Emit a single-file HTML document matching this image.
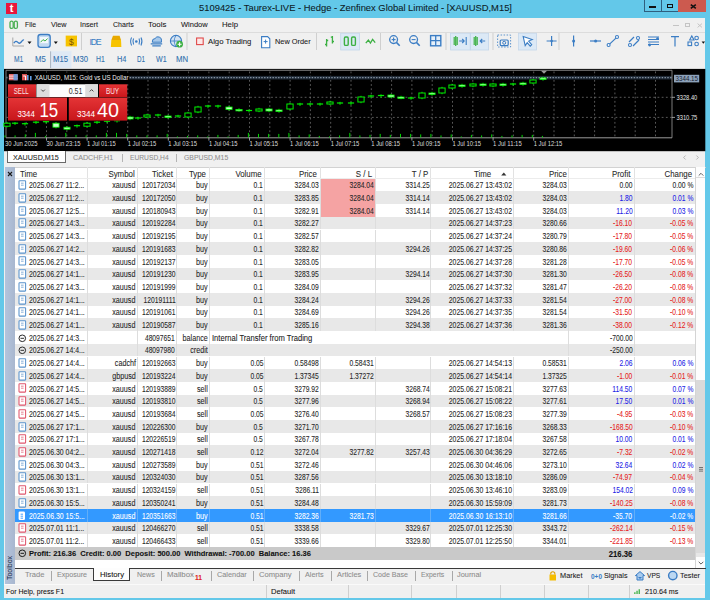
<!DOCTYPE html><html><head><meta charset="utf-8"><style>
*{margin:0;padding:0;box-sizing:border-box}
html,body{width:710px;height:600px;overflow:hidden;background:#63c8e9;font-family:"Liberation Sans",sans-serif;color:#1a1a1a}
.a{position:absolute;white-space:nowrap;-webkit-text-stroke:0.08px currentColor}
.bx{position:absolute}
</style></head><body>

<div class="bx" style="left:6px;top:3px;width:11px;height:11px;background:#e8173c;"></div>
<div class="a" style="left:7.67px;top:3.19px;font-size:11px;line-height:11px;width:5.66px;text-align:right;color:#fff;font-weight:bold;">t</div>
<div class="a" style="left:199.20px;top:3.81px;font-size:9.2px;line-height:9.2px;width:308.65px;color:#0d1b26;transform:scaleX(1.022);transform-origin:left center;">5109425 - Taurex-LIVE - Hedge - Zenfinex Global Limited - [XAUUSD,M15]</div>
<div class="bx" style="left:643.5px;top:0px;width:18px;height:12.3px;background:#63c8e9;border-left:1px solid #2f5f7e;border-bottom:1px solid #2f5f7e"></div>
<div class="bx" style="left:649px;top:5.9px;width:6.9px;height:2px;background:#111;"></div>
<div class="bx" style="left:661.2px;top:0px;width:17px;height:12.3px;background:#63c8e9;border-left:1px solid #2f5f7e;border-bottom:1px solid #2f5f7e"></div>
<div class="bx" style="left:667.1px;top:3.7px;width:6px;height:4.4px;background:transparent;border:1.3px solid #111;border-top-width:1.8px"></div>
<div class="bx" style="left:678px;top:0px;width:28px;height:12.3px;background:#cc5a4f;"></div>
<svg class="a" style="left:689.5px;top:3.6px" width="7" height="5"><path d="M0.8 0.6 L5.8 4.4 M5.8 0.6 L0.8 4.4" stroke="#111" stroke-width="1.5"/></svg>
<div class="bx" style="left:4px;top:17.6px;width:701.3px;height:580px;background:#f0f0f0;"></div>
<div class="bx" style="left:4px;top:17.6px;width:701.3px;height:13.9px;background:#f0f0f0;"></div>
<div class="bx" style="left:4px;top:31.5px;width:701.3px;height:1px;background:#dcdcdc;"></div>
<svg class="a" style="left:8.6px;top:19.6px" width="10" height="10" viewBox="0 0 10 10"><rect x="1" y="1.2" width="3.2" height="7.2" rx="1.5" fill="none" stroke="#4aae52" stroke-width="1.3"/><rect x="5.2" y="1.2" width="3.2" height="7.2" rx="1.5" fill="none" stroke="#4aae52" stroke-width="1.3"/></svg>
<div class="a" style="left:25.00px;top:20.63px;font-size:8px;line-height:8px;width:14.89px;color:#1a1a1a;transform:scaleX(0.853);transform-origin:left center;">File</div>
<div class="a" style="left:50.50px;top:20.63px;font-size:8px;line-height:8px;width:19.20px;color:#1a1a1a;transform:scaleX(0.901);transform-origin:left center;">View</div>
<div class="a" style="left:80.00px;top:20.63px;font-size:8px;line-height:8px;width:22.01px;color:#1a1a1a;transform:scaleX(0.900);transform-origin:left center;">Insert</div>
<div class="a" style="left:112.80px;top:20.63px;font-size:8px;line-height:8px;width:25.56px;color:#1a1a1a;transform:scaleX(0.883);transform-origin:left center;">Charts</div>
<div class="a" style="left:148.30px;top:20.63px;font-size:8px;line-height:8px;width:20.68px;color:#1a1a1a;transform:scaleX(0.980);transform-origin:left center;">Tools</div>
<div class="a" style="left:181.30px;top:20.63px;font-size:8px;line-height:8px;width:30.45px;color:#1a1a1a;transform:scaleX(0.935);transform-origin:left center;">Window</div>
<div class="a" style="left:221.80px;top:20.63px;font-size:8px;line-height:8px;width:18.45px;color:#1a1a1a;transform:scaleX(0.972);transform-origin:left center;">Help</div>
<div class="bx" style="left:673.2px;top:25px;width:5.5px;height:1.2px;background:#c4c4c4;"></div>
<div class="bx" style="left:684.7px;top:22.9px;width:5px;height:4px;background:transparent;border:1px solid #c4c4c4;border-top-width:1.5px"></div>
<svg class="a" style="left:696.5px;top:22.5px" width="6" height="5"><path d="M0.6 0.6 L5 4.4 M5 0.6 L0.6 4.4" stroke="#c4c4c4" stroke-width="1"/></svg>
<svg class="a" style="left:0;top:0" width="710" height="70" viewBox="0 0 710 70"><line x1="81.5" y1="33" x2="81.5" y2="50" stroke="#cfcfcf" stroke-width="1"/><line x1="187" y1="33" x2="187" y2="50" stroke="#cfcfcf" stroke-width="1"/><line x1="316.5" y1="33" x2="316.5" y2="50" stroke="#cfcfcf" stroke-width="1"/><line x1="380.5" y1="33" x2="380.5" y2="50" stroke="#cfcfcf" stroke-width="1"/><line x1="446" y1="33" x2="446" y2="50" stroke="#cfcfcf" stroke-width="1"/><line x1="493" y1="33" x2="493" y2="50" stroke="#cfcfcf" stroke-width="1"/><line x1="559" y1="33" x2="559" y2="50" stroke="#cfcfcf" stroke-width="1"/><path d="M12.8 37.5 V46 H24" fill="none" stroke="#a8a8a8" stroke-width="1"/><path d="M13.8 43.2 Q15.8 40 17.6 42.2 T21.2 42 T24 40" fill="none" stroke="#3b7dc4" stroke-width="1.3"/><path d="M27.5 41.5 h4 l-2 2.6z" fill="#111"/><rect x="38" y="34.5" width="12.2" height="12.8" rx="2.6" fill="#c3daf1" stroke="#3b7dc4" stroke-width="1.3"/><rect x="40" y="37" width="8.2" height="6.2" fill="#f2f8fd"/><path d="M40.6 42.2 L43 39.6 L45 41 L47.6 38.6" fill="none" stroke="#3cb043" stroke-width="1"/><path d="M53.8 41.5 h4 l-2 2.6z" fill="#111"/><rect x="65.7" y="35.6" width="11.3" height="10.8" fill="#f7c300"/><text x="71.4" y="44.6" font-size="8.5" text-anchor="middle" fill="#7a5200" font-family="Liberation Sans">$</text><text x="89.5" y="45.2" font-size="8.8" fill="#3b7dc4" font-family="Liberation Sans" letter-spacing="-0.7" textLength="11.5">IDE</text><path d="M111.3 40 h9.7 l0.4 7 h-10.5z" fill="#f7c300"/><path d="M113 35.8 h6.6 l1.4 4.2 h-9.6z" fill="#e8a900"/><circle cx="136.3" cy="41.5" r="1.3" fill="#3b7dc4"/><path d="M133.6 38.6 Q132.2 41.5 133.6 44.4 M139 38.6 Q140.4 41.5 139 44.4 M131.6 37.6 Q129.6 41.5 131.6 45.4 M141 37.6 Q143 41.5 141 45.4" fill="none" stroke="#3b7dc4" stroke-width="1.1"/><path d="M152.3 42.2 Q152 38.6 155 38.6 Q156.6 35.9 159.2 37 Q162.2 37.6 161.5 42.2z" fill="#a7c8ea" stroke="#3b7dc4" stroke-width="1"/><path d="M150.7 43.8 h11.5 M152.3 45.8 h8.5" stroke="#3b7dc4" stroke-width="1.2"/><circle cx="176" cy="41" r="5.6" fill="#d4e3f2" stroke="#3b7dc4" stroke-width="1.1"/><path d="M176 35.4 Q172.4 41 176 46.6 M170.4 41 h11.2" fill="none" stroke="#3b7dc4" stroke-width="0.8"/><circle cx="179.6" cy="44.2" r="3.4" fill="#3cb043"/><path d="M177.6 44.2 h4 M179.6 42.2 v4" stroke="#fff" stroke-width="1.1"/><rect x="196.6" y="38" width="6.6" height="6.6" fill="#fde8e8" stroke="#e04a4a" stroke-width="1.1"/><path d="M261.6 36.6 h6 l2.2 2.2 v9 h-8.2z" fill="#fff" stroke="#3b7dc4" stroke-width="1.1"/><path d="M263.6 41.6 h4 M265.6 39.6 v4" stroke="#3b7dc4" stroke-width="1"/><path d="M326.6 39 v7.5 M325 44.5 h1.6 M326.6 40.5 h1.6 M332.4 36 v7.5 M330.8 37.2 h1.6 M332.4 41.5 h1.6" stroke="#3cb043" stroke-width="1.3" fill="none"/><rect x="340.7" y="33.2" width="18.8" height="16.8" fill="#dce9f6" stroke="#c4d6ea" stroke-width="0.8"/><rect x="344.4" y="37" width="3.8" height="8.4" rx="1.2" fill="none" stroke="#3cb043" stroke-width="1.4"/><rect x="351.6" y="37" width="3.8" height="8.4" rx="1.2" fill="none" stroke="#3cb043" stroke-width="1.4"/><path d="M365.8 43.2 l2.6 -3.2 l2 3 l2.2 -3.6 l2.6 3.2" fill="none" stroke="#3cb043" stroke-width="1.3"/><circle cx="393.6" cy="39.6" r="3.9" fill="none" stroke="#3b7dc4" stroke-width="1.3"/><path d="M396.40000000000003 42.4 l3.3 3.3" stroke="#3b7dc4" stroke-width="1.5"/><path d="M391.6 39.6 h4" stroke="#3b7dc4" stroke-width="1.1"/><path d="M393.6 37.6 v4" stroke="#3b7dc4" stroke-width="1.1"/><circle cx="413.6" cy="39.6" r="3.9" fill="none" stroke="#3b7dc4" stroke-width="1.3"/><path d="M416.40000000000003 42.4 l3.3 3.3" stroke="#3b7dc4" stroke-width="1.5"/><path d="M411.6 39.6 h4" stroke="#3b7dc4" stroke-width="1.1"/><rect x="430.6" y="35.6" width="10.2" height="10.2" fill="#e6f0fa" stroke="#3b7dc4" stroke-width="1.4"/><path d="M435.7 35.6 v10.2 M430.6 40.7 h10.2" stroke="#3b7dc4" stroke-width="1.3"/><rect x="450.6" y="33.2" width="19.6" height="16.8" fill="#dce9f6" stroke="#c4d6ea" stroke-width="0.8"/><rect x="470.6" y="33.2" width="18" height="16.8" fill="#dce9f6" stroke="#c4d6ea" stroke-width="0.8"/><path d="M454.2 37 v8 M457.2 37 v8 M455.7 36 v10" stroke="#3cb043" stroke-width="1.2"/><path d="M459.2 41 h5 M462.2 39 l2 2 l-2 2 M466.2 37 v8" stroke="#3b7dc4" stroke-width="1.1" fill="none"/><path d="M474.2 37 v8 M477.2 37 v8 M475.7 36 v10" stroke="#3cb043" stroke-width="1.2"/><path d="M485.2 41 h-5 M482.2 39 l-2 2 l2 2" stroke="#3b7dc4" stroke-width="1.1" fill="none"/><rect x="497.6" y="35" width="13" height="12" fill="none" stroke="#3b7dc4" stroke-width="0.8" stroke-dasharray="1.5 1.5"/><rect x="500.2" y="40" width="8" height="5.6" rx="1" fill="none" stroke="#3b7dc4" stroke-width="1.2"/><circle cx="504.2" cy="42.8" r="1.5" fill="none" stroke="#3b7dc4" stroke-width="1"/><rect x="518.6" y="33.2" width="18" height="16.8" fill="#dce9f6" stroke="#c4d6ea" stroke-width="0.8"/><path d="M523.2 36.6 l9 3 l-3.5 1.5 l3 3.5 l-1.5 1.5 l-3 -3.5 l-2 3z" fill="#fff" stroke="#3b7dc4" stroke-width="1.1"/><path d="M551.6 36 v10 M546.6 41 h10" stroke="#3b7dc4" stroke-width="1.2"/><circle cx="551.6" cy="41" r="1.3" fill="#3b7dc4"/><path d="M573.6 35.6 v11" stroke="#3b7dc4" stroke-width="1.2"/><circle cx="573.6" cy="41" r="1.5" fill="#3b7dc4"/><path d="M590 41 h11" stroke="#3b7dc4" stroke-width="1.2"/><circle cx="595.6" cy="41" r="1.5" fill="#3b7dc4"/><path d="M608 45.6 l9.5 -9" stroke="#3b7dc4" stroke-width="1.2"/><circle cx="608.6" cy="45" r="1.5" fill="#fff" stroke="#3b7dc4" stroke-width="1.1"/><circle cx="617" cy="37" r="1.5" fill="#fff" stroke="#3b7dc4" stroke-width="1.1"/><path d="M629 42 l5 -5 M633 46 l6 -6" stroke="#3b7dc4" stroke-width="1.2"/><circle cx="630" cy="45" r="1.5" fill="#fff" stroke="#3b7dc4" stroke-width="1.1"/><circle cx="638" cy="38" r="1.5" fill="#fff" stroke="#3b7dc4" stroke-width="1.1"/><path d="M648 37 h11 M648 39.5 h11 M648 42 h11 M648 44.5 h11" stroke="#3b7dc4" stroke-width="1"/><circle cx="657.6" cy="38.6" r="1.4" fill="#3b7dc4"/><circle cx="649.6" cy="45" r="1.4" fill="#3b7dc4"/><path d="M671 36.6 h8 M675 36.6 v10" stroke="#3b7dc4" stroke-width="1.2"/><path d="M689.6 40 l2.2 -4 l2.2 4z" fill="none" stroke="#3b7dc4" stroke-width="1.1"/><circle cx="696.6" cy="38" r="1.8" fill="none" stroke="#3b7dc4" stroke-width="1.1"/><rect x="688" y="42" width="3.6" height="3.6" fill="none" stroke="#3b7dc4" stroke-width="1.1"/><circle cx="696.6" cy="44" r="1.8" fill="none" stroke="#3b7dc4" stroke-width="1.1"/><path d="M701.6 41.6 h3.5 l-1.75 2.2z" fill="#111"/><rect x="50.1" y="50.9" width="21.4" height="17.2" fill="#dfe9f5"/><line x1="50.6" y1="51" x2="50.6" y2="68" stroke="#a9b4c0" stroke-width="1"/><line x1="50.1" y1="51.2" x2="71.5" y2="51.2" stroke="#e8eef5" stroke-width="0.6"/></svg>
<div class="a" style="left:208.40px;top:38.23px;font-size:8px;line-height:8px;width:46.92px;color:#1a1a1a;transform:scaleX(0.966);transform-origin:left center;">Algo Trading</div>
<div class="a" style="left:275.00px;top:38.23px;font-size:8px;line-height:8px;width:40.68px;color:#1a1a1a;transform:scaleX(0.920);transform-origin:left center;">New Order</div>
<div class="a" style="left:14.40px;top:55.20px;font-size:8.5px;line-height:8.5px;width:13.81px;color:#2f6fae;transform:scaleX(0.788);transform-origin:left center;">M1</div>
<div class="a" style="left:34.60px;top:55.20px;font-size:8.5px;line-height:8.5px;width:13.81px;color:#2f6fae;transform:scaleX(0.906);transform-origin:left center;">M5</div>
<div class="a" style="left:52.70px;top:55.20px;font-size:8.5px;line-height:8.5px;width:18.54px;color:#2f6fae;transform:scaleX(0.901);transform-origin:left center;">M15</div>
<div class="a" style="left:73.00px;top:55.20px;font-size:8.5px;line-height:8.5px;width:18.54px;color:#2f6fae;transform:scaleX(0.901);transform-origin:left center;">M30</div>
<div class="a" style="left:95.80px;top:55.20px;font-size:8.5px;line-height:8.5px;width:12.87px;color:#2f6fae;transform:scaleX(0.801);transform-origin:left center;">H1</div>
<div class="a" style="left:116.60px;top:55.20px;font-size:8.5px;line-height:8.5px;width:12.87px;color:#2f6fae;transform:scaleX(0.865);transform-origin:left center;">H4</div>
<div class="a" style="left:137.00px;top:55.20px;font-size:8.5px;line-height:8.5px;width:12.87px;color:#2f6fae;transform:scaleX(0.736);transform-origin:left center;">D1</div>
<div class="a" style="left:156.00px;top:55.20px;font-size:8.5px;line-height:8.5px;width:14.75px;color:#2f6fae;transform:scaleX(0.831);transform-origin:left center;">W1</div>
<div class="a" style="left:175.50px;top:55.20px;font-size:8.5px;line-height:8.5px;width:15.22px;color:#2f6fae;transform:scaleX(0.915);transform-origin:left center;">MN</div>
<svg class="a" style="left:0;top:0" width="710" height="152" viewBox="0 0 710 152"><rect x="4" y="68.9" width="701.3" height="82.3" fill="#000"/><line x1="26.2" y1="71.5" x2="26.2" y2="137" stroke="#808080" stroke-width="0.7" stroke-dasharray="1.8 2.4"/><line x1="46.5" y1="71.5" x2="46.5" y2="137" stroke="#808080" stroke-width="0.7" stroke-dasharray="1.8 2.4"/><line x1="66.8" y1="71.5" x2="66.8" y2="137" stroke="#808080" stroke-width="0.7" stroke-dasharray="1.8 2.4"/><line x1="87.1" y1="71.5" x2="87.1" y2="137" stroke="#808080" stroke-width="0.7" stroke-dasharray="1.8 2.4"/><line x1="107.4" y1="71.5" x2="107.4" y2="137" stroke="#808080" stroke-width="0.7" stroke-dasharray="1.8 2.4"/><line x1="127.7" y1="71.5" x2="127.7" y2="137" stroke="#808080" stroke-width="0.7" stroke-dasharray="1.8 2.4"/><line x1="148.0" y1="71.5" x2="148.0" y2="137" stroke="#808080" stroke-width="0.7" stroke-dasharray="1.8 2.4"/><line x1="168.3" y1="71.5" x2="168.3" y2="137" stroke="#808080" stroke-width="0.7" stroke-dasharray="1.8 2.4"/><line x1="188.6" y1="71.5" x2="188.6" y2="137" stroke="#808080" stroke-width="0.7" stroke-dasharray="1.8 2.4"/><line x1="208.9" y1="71.5" x2="208.9" y2="137" stroke="#808080" stroke-width="0.7" stroke-dasharray="1.8 2.4"/><line x1="229.2" y1="71.5" x2="229.2" y2="137" stroke="#808080" stroke-width="0.7" stroke-dasharray="1.8 2.4"/><line x1="249.5" y1="71.5" x2="249.5" y2="137" stroke="#808080" stroke-width="0.7" stroke-dasharray="1.8 2.4"/><line x1="269.8" y1="71.5" x2="269.8" y2="137" stroke="#808080" stroke-width="0.7" stroke-dasharray="1.8 2.4"/><line x1="290.1" y1="71.5" x2="290.1" y2="137" stroke="#808080" stroke-width="0.7" stroke-dasharray="1.8 2.4"/><line x1="310.4" y1="71.5" x2="310.4" y2="137" stroke="#808080" stroke-width="0.7" stroke-dasharray="1.8 2.4"/><line x1="330.7" y1="71.5" x2="330.7" y2="137" stroke="#808080" stroke-width="0.7" stroke-dasharray="1.8 2.4"/><line x1="351.0" y1="71.5" x2="351.0" y2="137" stroke="#808080" stroke-width="0.7" stroke-dasharray="1.8 2.4"/><line x1="371.3" y1="71.5" x2="371.3" y2="137" stroke="#808080" stroke-width="0.7" stroke-dasharray="1.8 2.4"/><line x1="391.6" y1="71.5" x2="391.6" y2="137" stroke="#808080" stroke-width="0.7" stroke-dasharray="1.8 2.4"/><line x1="411.9" y1="71.5" x2="411.9" y2="137" stroke="#808080" stroke-width="0.7" stroke-dasharray="1.8 2.4"/><line x1="432.2" y1="71.5" x2="432.2" y2="137" stroke="#808080" stroke-width="0.7" stroke-dasharray="1.8 2.4"/><line x1="452.5" y1="71.5" x2="452.5" y2="137" stroke="#808080" stroke-width="0.7" stroke-dasharray="1.8 2.4"/><line x1="472.8" y1="71.5" x2="472.8" y2="137" stroke="#808080" stroke-width="0.7" stroke-dasharray="1.8 2.4"/><line x1="493.1" y1="71.5" x2="493.1" y2="137" stroke="#808080" stroke-width="0.7" stroke-dasharray="1.8 2.4"/><line x1="513.4" y1="71.5" x2="513.4" y2="137" stroke="#808080" stroke-width="0.7" stroke-dasharray="1.8 2.4"/><line x1="533.7" y1="71.5" x2="533.7" y2="137" stroke="#808080" stroke-width="0.7" stroke-dasharray="1.8 2.4"/><line x1="554.0" y1="71.5" x2="554.0" y2="137" stroke="#808080" stroke-width="0.7" stroke-dasharray="1.8 2.4"/><line x1="574.3" y1="71.5" x2="574.3" y2="137" stroke="#808080" stroke-width="0.7" stroke-dasharray="1.8 2.4"/><line x1="594.6" y1="71.5" x2="594.6" y2="137" stroke="#808080" stroke-width="0.7" stroke-dasharray="1.8 2.4"/><line x1="614.9" y1="71.5" x2="614.9" y2="137" stroke="#808080" stroke-width="0.7" stroke-dasharray="1.8 2.4"/><line x1="635.2" y1="71.5" x2="635.2" y2="137" stroke="#808080" stroke-width="0.7" stroke-dasharray="1.8 2.4"/><line x1="655.5" y1="71.5" x2="655.5" y2="137" stroke="#808080" stroke-width="0.7" stroke-dasharray="1.8 2.4"/><line x1="6.5" y1="97.3" x2="672" y2="97.3" stroke="#808080" stroke-width="0.7" stroke-dasharray="1.8 2.4"/><line x1="6.5" y1="117.4" x2="672" y2="117.4" stroke="#808080" stroke-width="0.7" stroke-dasharray="1.8 2.4"/><rect x="6.5" y="75.9" width="665.5" height="3.6" fill="#1f2a36"/><line x1="6.5" y1="77.6" x2="672" y2="77.6" stroke="#8794a4" stroke-width="1.4" stroke-dasharray="1.4 1.4"/><path d="M6 137.8 V70.3 H672 V137.8" fill="none" stroke="#8a8a8a" stroke-width="0.9"/><line x1="6" y1="137.8" x2="672" y2="137.8" stroke="#9a9a9a" stroke-width="1"/><line x1="672" y1="97.3" x2="675" y2="97.3" stroke="#bbb" stroke-width="0.8"/><text x="676.50" y="100.00" font-size="7.6" fill="#e6e6e6" font-family="Liberation Sans" font-weight="normal" text-anchor="start" textLength="20.80" lengthAdjust="spacingAndGlyphs">3328.40</text><line x1="672" y1="117.4" x2="675" y2="117.4" stroke="#bbb" stroke-width="0.8"/><text x="676.50" y="120.10" font-size="7.6" fill="#e6e6e6" font-family="Liberation Sans" font-weight="normal" text-anchor="start" textLength="20.80" lengthAdjust="spacingAndGlyphs">3310.75</text><rect x="674" y="74.8" width="25.2" height="7.6" fill="#8da2ba"/><text x="675.60" y="81.20" font-size="7.4" fill="#152030" font-family="Liberation Sans" font-weight="normal" text-anchor="start" textLength="22.40" lengthAdjust="spacingAndGlyphs">3344.15</text><text x="5.00" y="145.80" font-size="7.6" fill="#dedede" font-family="Liberation Sans" font-weight="normal" text-anchor="start" textLength="32.50" lengthAdjust="spacingAndGlyphs">30 Jun 2025</text><text x="46.50" y="145.80" font-size="7.6" fill="#dedede" font-family="Liberation Sans" font-weight="normal" text-anchor="start" textLength="34.00" lengthAdjust="spacingAndGlyphs">30 Jun 23:15</text><line x1="46.5" y1="137.4" x2="46.5" y2="140.6" stroke="#bbb" stroke-width="0.8"/><text x="87.10" y="145.80" font-size="7.6" fill="#dedede" font-family="Liberation Sans" font-weight="normal" text-anchor="start" textLength="28.60" lengthAdjust="spacingAndGlyphs">1 Jul 01:15</text><line x1="87.1" y1="137.4" x2="87.1" y2="140.6" stroke="#bbb" stroke-width="0.8"/><text x="127.70" y="145.80" font-size="7.6" fill="#dedede" font-family="Liberation Sans" font-weight="normal" text-anchor="start" textLength="28.60" lengthAdjust="spacingAndGlyphs">1 Jul 02:15</text><line x1="127.7" y1="137.4" x2="127.7" y2="140.6" stroke="#bbb" stroke-width="0.8"/><text x="168.30" y="145.80" font-size="7.6" fill="#dedede" font-family="Liberation Sans" font-weight="normal" text-anchor="start" textLength="28.60" lengthAdjust="spacingAndGlyphs">1 Jul 03:15</text><line x1="168.3" y1="137.4" x2="168.3" y2="140.6" stroke="#bbb" stroke-width="0.8"/><text x="208.90" y="145.80" font-size="7.6" fill="#dedede" font-family="Liberation Sans" font-weight="normal" text-anchor="start" textLength="28.60" lengthAdjust="spacingAndGlyphs">1 Jul 04:15</text><line x1="208.9" y1="137.4" x2="208.9" y2="140.6" stroke="#bbb" stroke-width="0.8"/><text x="249.50" y="145.80" font-size="7.6" fill="#dedede" font-family="Liberation Sans" font-weight="normal" text-anchor="start" textLength="28.60" lengthAdjust="spacingAndGlyphs">1 Jul 05:15</text><line x1="249.5" y1="137.4" x2="249.5" y2="140.6" stroke="#bbb" stroke-width="0.8"/><text x="290.10" y="145.80" font-size="7.6" fill="#dedede" font-family="Liberation Sans" font-weight="normal" text-anchor="start" textLength="28.60" lengthAdjust="spacingAndGlyphs">1 Jul 06:15</text><line x1="290.1" y1="137.4" x2="290.1" y2="140.6" stroke="#bbb" stroke-width="0.8"/><text x="330.70" y="145.80" font-size="7.6" fill="#dedede" font-family="Liberation Sans" font-weight="normal" text-anchor="start" textLength="28.60" lengthAdjust="spacingAndGlyphs">1 Jul 07:15</text><line x1="330.7" y1="137.4" x2="330.7" y2="140.6" stroke="#bbb" stroke-width="0.8"/><text x="371.30" y="145.80" font-size="7.6" fill="#dedede" font-family="Liberation Sans" font-weight="normal" text-anchor="start" textLength="28.60" lengthAdjust="spacingAndGlyphs">1 Jul 08:15</text><line x1="371.3" y1="137.4" x2="371.3" y2="140.6" stroke="#bbb" stroke-width="0.8"/><text x="411.90" y="145.80" font-size="7.6" fill="#dedede" font-family="Liberation Sans" font-weight="normal" text-anchor="start" textLength="28.60" lengthAdjust="spacingAndGlyphs">1 Jul 09:15</text><line x1="411.9" y1="137.4" x2="411.9" y2="140.6" stroke="#bbb" stroke-width="0.8"/><text x="452.50" y="145.80" font-size="7.6" fill="#dedede" font-family="Liberation Sans" font-weight="normal" text-anchor="start" textLength="28.60" lengthAdjust="spacingAndGlyphs">1 Jul 10:15</text><line x1="452.5" y1="137.4" x2="452.5" y2="140.6" stroke="#bbb" stroke-width="0.8"/><text x="493.10" y="145.80" font-size="7.6" fill="#dedede" font-family="Liberation Sans" font-weight="normal" text-anchor="start" textLength="28.60" lengthAdjust="spacingAndGlyphs">1 Jul 11:15</text><line x1="493.1" y1="137.4" x2="493.1" y2="140.6" stroke="#bbb" stroke-width="0.8"/><text x="533.70" y="145.80" font-size="7.6" fill="#dedede" font-family="Liberation Sans" font-weight="normal" text-anchor="start" textLength="28.60" lengthAdjust="spacingAndGlyphs">1 Jul 12:15</text><line x1="533.7" y1="137.4" x2="533.7" y2="140.6" stroke="#bbb" stroke-width="0.8"/><line x1="7" y1="122.0" x2="7" y2="127.4" stroke="#00ee00" stroke-width="0.9"/><rect x="3.9" y="123.2" width="6.2" height="3.0" fill="#000" stroke="#00ee00" stroke-width="1"/><line x1="15" y1="122.0" x2="15" y2="125.0" stroke="#00ee00" stroke-width="0.9"/><line x1="11.9" y1="123.2" x2="18.1" y2="123.2" stroke="#00ee00" stroke-width="1.2"/><line x1="25" y1="122.5" x2="25" y2="125.60000000000001" stroke="#00ee00" stroke-width="0.9"/><line x1="21.9" y1="123.7" x2="28.1" y2="123.7" stroke="#00ee00" stroke-width="1.2"/><line x1="36" y1="121.0" x2="36" y2="124.0" stroke="#00ee00" stroke-width="0.9"/><line x1="32.9" y1="122.2" x2="39.1" y2="122.2" stroke="#00ee00" stroke-width="1.2"/><line x1="46" y1="120.5" x2="46" y2="123.60000000000001" stroke="#00ee00" stroke-width="0.9"/><line x1="42.9" y1="121.7" x2="49.1" y2="121.7" stroke="#00ee00" stroke-width="1.2"/><line x1="56" y1="122.0" x2="56" y2="128.4" stroke="#00ee00" stroke-width="0.9"/><rect x="52.9" y="123.2" width="6.2" height="4.0" fill="#c8ffc8" stroke="#00ee00" stroke-width="0.8"/><line x1="67" y1="126.0" x2="67" y2="130.39999999999998" stroke="#00ee00" stroke-width="0.9"/><rect x="63.9" y="127.2" width="6.2" height="1.9999999999999858" fill="#c8ffc8" stroke="#00ee00" stroke-width="0.8"/><line x1="77" y1="124.5" x2="77" y2="127.7" stroke="#00ee00" stroke-width="0.9"/><line x1="73.9" y1="125.7" x2="80.1" y2="125.7" stroke="#00ee00" stroke-width="1.2"/><line x1="87" y1="122.0" x2="87" y2="127.4" stroke="#00ee00" stroke-width="0.9"/><rect x="83.9" y="123.2" width="6.2" height="3.0" fill="#000" stroke="#00ee00" stroke-width="1"/><line x1="97" y1="121.0" x2="97" y2="124.0" stroke="#00ee00" stroke-width="0.9"/><line x1="93.9" y1="122.2" x2="100.1" y2="122.2" stroke="#00ee00" stroke-width="1.2"/><line x1="107" y1="120.0" x2="107" y2="123.4" stroke="#00ee00" stroke-width="0.9"/><line x1="103.9" y1="121.2" x2="110.1" y2="121.2" stroke="#00ee00" stroke-width="1.2"/><line x1="117" y1="119.5" x2="117" y2="122.60000000000001" stroke="#00ee00" stroke-width="0.9"/><line x1="113.9" y1="120.7" x2="120.1" y2="120.7" stroke="#00ee00" stroke-width="1.2"/><line x1="130" y1="115.8" x2="130" y2="120.2" stroke="#00ee00" stroke-width="0.9"/><rect x="126.9" y="117" width="6.2" height="2" fill="#c8ffc8" stroke="#00ee00" stroke-width="0.8"/><line x1="138" y1="116.8" x2="138" y2="119.8" stroke="#00ee00" stroke-width="0.9"/><line x1="134.9" y1="118" x2="141.1" y2="118" stroke="#00ee00" stroke-width="1.2"/><line x1="147" y1="113.8" x2="147" y2="118.2" stroke="#00ee00" stroke-width="0.9"/><rect x="143.9" y="115" width="6.2" height="2" fill="#000" stroke="#00ee00" stroke-width="1"/><line x1="158" y1="113.8" x2="158" y2="116.8" stroke="#00ee00" stroke-width="0.9"/><line x1="154.9" y1="115" x2="161.1" y2="115" stroke="#00ee00" stroke-width="1.2"/><line x1="168" y1="114.8" x2="168" y2="118.7" stroke="#00ee00" stroke-width="0.9"/><rect x="164.9" y="116" width="6.2" height="1.5" fill="#c8ffc8" stroke="#00ee00" stroke-width="0.8"/><line x1="178" y1="114.8" x2="178" y2="117.8" stroke="#00ee00" stroke-width="0.9"/><line x1="174.9" y1="116" x2="181.1" y2="116" stroke="#00ee00" stroke-width="1.2"/><line x1="188" y1="111.8" x2="188" y2="118.2" stroke="#00ee00" stroke-width="0.9"/><rect x="184.9" y="113" width="6.2" height="4" fill="#000" stroke="#00ee00" stroke-width="1"/><line x1="198" y1="105.8" x2="198" y2="113.2" stroke="#00ee00" stroke-width="0.9"/><rect x="194.9" y="107" width="6.2" height="5" fill="#000" stroke="#00ee00" stroke-width="1"/><line x1="208" y1="104.8" x2="208" y2="108.2" stroke="#00ee00" stroke-width="0.9"/><line x1="204.9" y1="106" x2="211.1" y2="106" stroke="#00ee00" stroke-width="1.2"/><line x1="218" y1="104.8" x2="218" y2="108.2" stroke="#00ee00" stroke-width="0.9"/><line x1="214.9" y1="106" x2="221.1" y2="106" stroke="#00ee00" stroke-width="1.2"/><line x1="229" y1="105.8" x2="229" y2="110.7" stroke="#00ee00" stroke-width="0.9"/><rect x="225.9" y="107" width="6.2" height="2.5" fill="#c8ffc8" stroke="#00ee00" stroke-width="0.8"/><line x1="239" y1="108.3" x2="239" y2="111.7" stroke="#00ee00" stroke-width="0.9"/><rect x="235.9" y="109.5" width="6.2" height="1.4" fill="#c8ffc8" stroke="#00ee00" stroke-width="0.8"/><line x1="249" y1="109.3" x2="249" y2="112.4" stroke="#00ee00" stroke-width="0.9"/><line x1="245.9" y1="110.5" x2="252.1" y2="110.5" stroke="#00ee00" stroke-width="1.2"/><line x1="259" y1="107.8" x2="259" y2="112.2" stroke="#00ee00" stroke-width="0.9"/><rect x="255.9" y="109" width="6.2" height="2" fill="#000" stroke="#00ee00" stroke-width="1"/><line x1="269" y1="107.8" x2="269" y2="112.2" stroke="#00ee00" stroke-width="0.9"/><rect x="265.9" y="109" width="6.2" height="2" fill="#c8ffc8" stroke="#00ee00" stroke-width="0.8"/><line x1="279" y1="108.8" x2="279" y2="112.7" stroke="#00ee00" stroke-width="0.9"/><rect x="275.9" y="110" width="6.2" height="1.5" fill="#c8ffc8" stroke="#00ee00" stroke-width="0.8"/><line x1="290" y1="102.8" x2="290" y2="110.2" stroke="#00ee00" stroke-width="0.9"/><rect x="286.9" y="104" width="6.2" height="5" fill="#000" stroke="#00ee00" stroke-width="1"/><line x1="300" y1="102.8" x2="300" y2="106.0" stroke="#00ee00" stroke-width="0.9"/><line x1="296.9" y1="104" x2="303.1" y2="104" stroke="#00ee00" stroke-width="1.2"/><line x1="310" y1="102.8" x2="310" y2="105.8" stroke="#00ee00" stroke-width="0.9"/><line x1="306.9" y1="104" x2="313.1" y2="104" stroke="#00ee00" stroke-width="1.2"/><line x1="320" y1="102.8" x2="320" y2="105.8" stroke="#00ee00" stroke-width="0.9"/><line x1="316.9" y1="104" x2="323.1" y2="104" stroke="#00ee00" stroke-width="1.2"/><line x1="330" y1="100.8" x2="330" y2="105.2" stroke="#00ee00" stroke-width="0.9"/><rect x="326.9" y="102" width="6.2" height="2" fill="#000" stroke="#00ee00" stroke-width="1"/><line x1="340" y1="101.8" x2="340" y2="104.8" stroke="#00ee00" stroke-width="0.9"/><line x1="336.9" y1="103" x2="343.1" y2="103" stroke="#00ee00" stroke-width="1.2"/><line x1="351" y1="101.8" x2="351" y2="105.2" stroke="#00ee00" stroke-width="0.9"/><line x1="347.9" y1="103" x2="354.1" y2="103" stroke="#00ee00" stroke-width="1.2"/><line x1="361" y1="95.8" x2="361" y2="103.2" stroke="#00ee00" stroke-width="0.9"/><rect x="357.9" y="97" width="6.2" height="5" fill="#000" stroke="#00ee00" stroke-width="1"/><line x1="371" y1="94.8" x2="371" y2="98.2" stroke="#00ee00" stroke-width="0.9"/><line x1="367.9" y1="96" x2="374.1" y2="96" stroke="#00ee00" stroke-width="1.2"/><line x1="381" y1="94.3" x2="381" y2="97.7" stroke="#00ee00" stroke-width="0.9"/><line x1="377.9" y1="95.5" x2="384.1" y2="95.5" stroke="#00ee00" stroke-width="1.2"/><line x1="391" y1="93.8" x2="391" y2="98.2" stroke="#00ee00" stroke-width="0.9"/><rect x="387.9" y="95" width="6.2" height="2" fill="#c8ffc8" stroke="#00ee00" stroke-width="0.8"/><line x1="401" y1="95.8" x2="401" y2="99.2" stroke="#00ee00" stroke-width="0.9"/><rect x="397.9" y="97" width="6.2" height="1.4" fill="#c8ffc8" stroke="#00ee00" stroke-width="0.8"/><line x1="411" y1="96.8" x2="411" y2="99.8" stroke="#00ee00" stroke-width="0.9"/><line x1="407.9" y1="98" x2="414.1" y2="98" stroke="#00ee00" stroke-width="1.2"/><line x1="422" y1="91.8" x2="422" y2="99.2" stroke="#00ee00" stroke-width="0.9"/><rect x="418.9" y="93" width="6.2" height="5" fill="#000" stroke="#00ee00" stroke-width="1"/><line x1="432" y1="91.8" x2="432" y2="95.7" stroke="#00ee00" stroke-width="0.9"/><rect x="428.9" y="93" width="6.2" height="1.5" fill="#c8ffc8" stroke="#00ee00" stroke-width="0.8"/><line x1="442" y1="86.8" x2="442" y2="94.2" stroke="#00ee00" stroke-width="0.9"/><rect x="438.9" y="88" width="6.2" height="5" fill="#000" stroke="#00ee00" stroke-width="1"/><line x1="452" y1="83.8" x2="452" y2="89.2" stroke="#00ee00" stroke-width="0.9"/><rect x="448.9" y="85" width="6.2" height="3" fill="#000" stroke="#00ee00" stroke-width="1"/><line x1="462" y1="83.8" x2="462" y2="87.7" stroke="#00ee00" stroke-width="0.9"/><rect x="458.9" y="85" width="6.2" height="1.5" fill="#c8ffc8" stroke="#00ee00" stroke-width="0.8"/><line x1="473" y1="82.8" x2="473" y2="87.2" stroke="#00ee00" stroke-width="0.9"/><rect x="469.9" y="84" width="6.2" height="2" fill="#000" stroke="#00ee00" stroke-width="1"/><line x1="483" y1="82.8" x2="483" y2="86.7" stroke="#00ee00" stroke-width="0.9"/><rect x="479.9" y="84" width="6.2" height="1.5" fill="#c8ffc8" stroke="#00ee00" stroke-width="0.8"/><line x1="493" y1="82.8" x2="493" y2="87.2" stroke="#00ee00" stroke-width="0.9"/><rect x="489.9" y="84" width="6.2" height="2" fill="#000" stroke="#00ee00" stroke-width="1"/><line x1="503" y1="82.8" x2="503" y2="86.7" stroke="#00ee00" stroke-width="0.9"/><rect x="499.9" y="84" width="6.2" height="1.5" fill="#c8ffc8" stroke="#00ee00" stroke-width="0.8"/><line x1="513" y1="82.8" x2="513" y2="85.8" stroke="#00ee00" stroke-width="0.9"/><line x1="509.9" y1="84" x2="516.1" y2="84" stroke="#00ee00" stroke-width="1.2"/><line x1="523" y1="81.8" x2="523" y2="85.7" stroke="#00ee00" stroke-width="0.9"/><rect x="519.9" y="83" width="6.2" height="1.5" fill="#c8ffc8" stroke="#00ee00" stroke-width="0.8"/><line x1="533" y1="78.8" x2="533" y2="84.2" stroke="#00ee00" stroke-width="0.9"/><rect x="529.9" y="80" width="6.2" height="3" fill="#000" stroke="#00ee00" stroke-width="1"/><line x1="543" y1="76.8" x2="543" y2="80.7" stroke="#00ee00" stroke-width="0.9"/><rect x="539.9" y="78" width="6.2" height="1.5" fill="#c8ffc8" stroke="#00ee00" stroke-width="0.8"/><line x1="5.0" y1="137.4" x2="5.0" y2="135.4" stroke="#00ee00" stroke-width="0.9"/><line x1="15.1" y1="137.4" x2="15.1" y2="135.4" stroke="#00ee00" stroke-width="0.9"/><line x1="25.3" y1="137.4" x2="25.3" y2="134.4" stroke="#00ee00" stroke-width="0.9"/><line x1="35.4" y1="137.4" x2="35.4" y2="132.9" stroke="#00ee00" stroke-width="0.9"/><line x1="45.6" y1="137.4" x2="45.6" y2="135.9" stroke="#00ee00" stroke-width="0.9"/><line x1="55.7" y1="137.4" x2="55.7" y2="136.4" stroke="#00ee00" stroke-width="0.9"/><line x1="65.8" y1="137.4" x2="65.8" y2="132.9" stroke="#00ee00" stroke-width="0.9"/><line x1="76.0" y1="137.4" x2="76.0" y2="134.9" stroke="#00ee00" stroke-width="0.9"/><line x1="86.1" y1="137.4" x2="86.1" y2="135.4" stroke="#00ee00" stroke-width="0.9"/><line x1="96.3" y1="137.4" x2="96.3" y2="135.4" stroke="#00ee00" stroke-width="0.9"/><line x1="106.4" y1="137.4" x2="106.4" y2="132.9" stroke="#00ee00" stroke-width="0.9"/><line x1="116.5" y1="137.4" x2="116.5" y2="132.9" stroke="#00ee00" stroke-width="0.9"/><line x1="126.7" y1="137.4" x2="126.7" y2="133.9" stroke="#00ee00" stroke-width="0.9"/><line x1="136.8" y1="137.4" x2="136.8" y2="135.4" stroke="#00ee00" stroke-width="0.9"/><line x1="147.0" y1="137.4" x2="147.0" y2="135.4" stroke="#00ee00" stroke-width="0.9"/><line x1="157.1" y1="137.4" x2="157.1" y2="135.4" stroke="#00ee00" stroke-width="0.9"/><line x1="167.2" y1="137.4" x2="167.2" y2="133.9" stroke="#00ee00" stroke-width="0.9"/><line x1="177.4" y1="137.4" x2="177.4" y2="136.4" stroke="#00ee00" stroke-width="0.9"/><line x1="187.5" y1="137.4" x2="187.5" y2="135.9" stroke="#00ee00" stroke-width="0.9"/><line x1="197.7" y1="137.4" x2="197.7" y2="135.4" stroke="#00ee00" stroke-width="0.9"/><line x1="207.8" y1="137.4" x2="207.8" y2="136.4" stroke="#00ee00" stroke-width="0.9"/><line x1="217.9" y1="137.4" x2="217.9" y2="134.9" stroke="#00ee00" stroke-width="0.9"/><line x1="228.1" y1="137.4" x2="228.1" y2="136.4" stroke="#00ee00" stroke-width="0.9"/><line x1="238.2" y1="137.4" x2="238.2" y2="134.9" stroke="#00ee00" stroke-width="0.9"/><line x1="248.4" y1="137.4" x2="248.4" y2="132.9" stroke="#00ee00" stroke-width="0.9"/><line x1="258.5" y1="137.4" x2="258.5" y2="133.9" stroke="#00ee00" stroke-width="0.9"/><line x1="268.6" y1="137.4" x2="268.6" y2="133.9" stroke="#00ee00" stroke-width="0.9"/><line x1="278.8" y1="137.4" x2="278.8" y2="133.9" stroke="#00ee00" stroke-width="0.9"/><line x1="288.9" y1="137.4" x2="288.9" y2="132.9" stroke="#00ee00" stroke-width="0.9"/><line x1="299.1" y1="137.4" x2="299.1" y2="135.4" stroke="#00ee00" stroke-width="0.9"/><line x1="309.2" y1="137.4" x2="309.2" y2="134.4" stroke="#00ee00" stroke-width="0.9"/><line x1="319.3" y1="137.4" x2="319.3" y2="135.9" stroke="#00ee00" stroke-width="0.9"/><line x1="329.5" y1="137.4" x2="329.5" y2="136.4" stroke="#00ee00" stroke-width="0.9"/><line x1="339.6" y1="137.4" x2="339.6" y2="135.4" stroke="#00ee00" stroke-width="0.9"/><line x1="349.8" y1="137.4" x2="349.8" y2="132.9" stroke="#00ee00" stroke-width="0.9"/><line x1="359.9" y1="137.4" x2="359.9" y2="135.4" stroke="#00ee00" stroke-width="0.9"/><line x1="370.0" y1="137.4" x2="370.0" y2="134.9" stroke="#00ee00" stroke-width="0.9"/><line x1="380.2" y1="137.4" x2="380.2" y2="133.9" stroke="#00ee00" stroke-width="0.9"/><line x1="390.3" y1="137.4" x2="390.3" y2="134.9" stroke="#00ee00" stroke-width="0.9"/><line x1="400.5" y1="137.4" x2="400.5" y2="133.9" stroke="#00ee00" stroke-width="0.9"/><line x1="410.6" y1="137.4" x2="410.6" y2="133.9" stroke="#00ee00" stroke-width="0.9"/><line x1="420.7" y1="137.4" x2="420.7" y2="134.4" stroke="#00ee00" stroke-width="0.9"/><line x1="430.9" y1="137.4" x2="430.9" y2="133.9" stroke="#00ee00" stroke-width="0.9"/><line x1="441.0" y1="137.4" x2="441.0" y2="135.4" stroke="#00ee00" stroke-width="0.9"/><line x1="451.2" y1="137.4" x2="451.2" y2="134.4" stroke="#00ee00" stroke-width="0.9"/><line x1="461.3" y1="137.4" x2="461.3" y2="136.4" stroke="#00ee00" stroke-width="0.9"/><line x1="471.4" y1="137.4" x2="471.4" y2="134.9" stroke="#00ee00" stroke-width="0.9"/><line x1="481.6" y1="137.4" x2="481.6" y2="135.4" stroke="#00ee00" stroke-width="0.9"/><line x1="491.7" y1="137.4" x2="491.7" y2="134.4" stroke="#00ee00" stroke-width="0.9"/><line x1="501.9" y1="137.4" x2="501.9" y2="135.9" stroke="#00ee00" stroke-width="0.9"/><line x1="512.0" y1="137.4" x2="512.0" y2="135.4" stroke="#00ee00" stroke-width="0.9"/><line x1="522.1" y1="137.4" x2="522.1" y2="134.9" stroke="#00ee00" stroke-width="0.9"/><line x1="532.3" y1="137.4" x2="532.3" y2="134.9" stroke="#00ee00" stroke-width="0.9"/><line x1="542.4" y1="137.4" x2="542.4" y2="135.9" stroke="#00ee00" stroke-width="0.9"/><path d="M541 70.8 h6 l-3 3z" fill="#9a9a9a"/><rect x="7.5" y="72.5" width="121.5" height="10" fill="#000"/><rect x="8.9" y="74" width="8.8" height="6.3" fill="#e86a6a"/><path d="M8.9 76.1 h8.8 M8.9 78.2 h8.8" stroke="#fff" stroke-width="0.8"/><rect x="13.5" y="74" width="4.2" height="6.3" fill="#5b9ae0" opacity="0.85"/><rect x="22" y="74" width="5" height="6.3" fill="#d85050"/><path d="M27.8 75 v5.3 M30.8 76 v4.3" stroke="#68a8f0" stroke-width="1.5"/><path d="M23.2 76 h2.4 v4.2" stroke="#fff" stroke-width="1" fill="none"/><text x="34.70" y="79.90" font-size="7.6" fill="#eeeeee" font-family="Liberation Sans" font-weight="normal" text-anchor="start" textLength="93.80" lengthAdjust="spacingAndGlyphs">XAUUSD, M15:  Gold vs US Dollar</text><rect x="8" y="84.3" width="119.2" height="36.3" fill="#000"/><defs><linearGradient id="rg" x1="0" y1="0" x2="0" y2="1"><stop offset="0" stop-color="#e43436"/><stop offset="1" stop-color="#c8161b"/></linearGradient></defs><rect x="8" y="84.3" width="28" height="12.9" fill="url(#rg)"/><rect x="99" y="84.3" width="28.2" height="12.9" fill="url(#rg)"/><text x="13.70" y="94.10" font-size="8.6" fill="#fbe3e3" font-family="Liberation Sans" font-weight="normal" text-anchor="start" textLength="15.10" lengthAdjust="spacingAndGlyphs">SELL</text><text x="105.90" y="94.10" font-size="8.6" fill="#fbe3e3" font-family="Liberation Sans" font-weight="normal" text-anchor="start" textLength="13.10" lengthAdjust="spacingAndGlyphs">BUY</text><rect x="36.6" y="84.3" width="61.4" height="12.8" fill="#fdfdfd"/><rect x="36.6" y="84.3" width="12.9" height="12.8" fill="#dcdcdc"/><rect x="85.2" y="84.3" width="12.8" height="12.8" fill="#dcdcdc"/><path d="M41.3 89.6 l1.8 1.8 l1.8 -1.8" fill="none" stroke="#444" stroke-width="1"/><path d="M89.8 91.4 l1.8 -1.8 l1.8 1.8" fill="none" stroke="#444" stroke-width="1"/><text x="68.70" y="94.10" font-size="8.6" fill="#333" font-family="Liberation Sans" font-weight="normal" text-anchor="start" textLength="13.70" lengthAdjust="spacingAndGlyphs">0.51</text><rect x="8" y="97.6" width="59" height="23" fill="url(#rg)"/><rect x="68.8" y="97.6" width="58.4" height="23" fill="url(#rg)"/><text x="17.40" y="116.80" font-size="8.4" fill="#fff" font-family="Liberation Sans" font-weight="normal" text-anchor="start" textLength="17.40" lengthAdjust="spacingAndGlyphs">3344</text><text x="39.40" y="116.80" font-size="19.5" fill="#fff" font-family="Liberation Sans" font-weight="normal" text-anchor="start" textLength="18.80" lengthAdjust="spacingAndGlyphs">15</text><text x="76.90" y="116.80" font-size="8.4" fill="#fff" font-family="Liberation Sans" font-weight="normal" text-anchor="start" textLength="18.00" lengthAdjust="spacingAndGlyphs">3344</text><text x="97.00" y="116.80" font-size="19.5" fill="#fff" font-family="Liberation Sans" font-weight="normal" text-anchor="start" textLength="22.00" lengthAdjust="spacingAndGlyphs">40</text></svg>
<div class="bx" style="left:7px;top:151.2px;width:58.5px;height:11.5px;background:#fff;border:1px solid #6a6a6a;border-top:none"></div>
<div class="a" style="left:12.80px;top:153.63px;font-size:8px;line-height:8px;width:53.13px;color:#1a1a1a;transform:scaleX(0.894);transform-origin:left center;">XAUUSD,M15</div>
<div class="a" style="left:73.40px;top:153.63px;font-size:8px;line-height:8px;width:46.90px;color:#8e8e8e;transform:scaleX(0.895);transform-origin:left center;">CADCHF,H1</div>
<div class="a" style="left:129.80px;top:153.63px;font-size:8px;line-height:8px;width:48.23px;color:#8e8e8e;transform:scaleX(0.835);transform-origin:left center;">EURUSD,H4</div>
<div class="a" style="left:184.00px;top:153.63px;font-size:8px;line-height:8px;width:53.57px;color:#8e8e8e;transform:scaleX(0.857);transform-origin:left center;">GBPUSD,M15</div>
<div class="bx" style="left:122px;top:153.5px;width:1px;height:8px;background:#b4b4b4;"></div>
<div class="bx" style="left:176px;top:153.5px;width:1px;height:8px;background:#b4b4b4;"></div>
<svg class="a" style="left:680px;top:153px" width="25" height="9"><path d="M5.6 2.5 l-2 2 l2 2" fill="none" stroke="#b0b0b0" stroke-width="0.9"/><path d="M16.4 2.5 l2 2 l-2 2" fill="none" stroke="#b0b0b0" stroke-width="0.9"/></svg>
<div class="bx" style="left:4.5px;top:167.3px;width:10px;height:416.5px;background:linear-gradient(90deg,#b4c4dc,#a8b7cf);"></div>
<svg class="a" style="left:6.5px;top:170.5px" width="6" height="6"><path d="M1 1 L5 5 M5 1 L1 5" stroke="#1a1a1a" stroke-width="1.1"/></svg>
<div class="a" style="left:5px;top:580px;transform-origin:0 0;transform:rotate(-90deg) scaleX(0.87);font-size:8px;line-height:9px;color:#1c2d4a">Toolbox</div>
<div class="bx" style="left:14.5px;top:167.6px;width:681.5px;height:401px;background:#fff;"></div>
<div class="bx" style="left:14.5px;top:166.9px;width:691px;height:0.8px;background:#d2d2d2;"></div>
<div class="bx" style="left:14.5px;top:178.2px;width:681.2px;height:0.6px;background:#ececec;"></div>
<div class="a" style="left:20.00px;top:169.57px;font-size:8.3px;line-height:8.3px;width:20.14px;color:#2a2a2a;transform:scaleX(0.950);transform-origin:left center;">Time</div>
<div class="a" style="left:105.02px;top:169.57px;font-size:8.3px;line-height:8.3px;width:29.68px;text-align:right;color:#2a2a2a;transform:scaleX(0.950);transform-origin:right center;">Symbol</div>
<div class="a" style="left:149.37px;top:169.57px;font-size:8.3px;line-height:8.3px;width:23.83px;text-align:right;color:#2a2a2a;transform:scaleX(0.950);transform-origin:right center;">Ticket</div>
<div class="a" style="left:186.41px;top:169.57px;font-size:8.3px;line-height:8.3px;width:19.99px;text-align:right;color:#2a2a2a;transform:scaleX(0.950);transform-origin:right center;">Type</div>
<div class="a" style="left:231.91px;top:169.57px;font-size:8.3px;line-height:8.3px;width:29.69px;text-align:right;color:#2a2a2a;transform:scaleX(0.950);transform-origin:right center;">Volume</div>
<div class="a" style="left:296.49px;top:169.57px;font-size:8.3px;line-height:8.3px;width:20.91px;text-align:right;color:#2a2a2a;transform:scaleX(0.950);transform-origin:right center;">Price</div>
<div class="a" style="left:353.13px;top:169.57px;font-size:8.3px;line-height:8.3px;width:19.07px;text-align:right;color:#2a2a2a;transform:scaleX(0.950);transform-origin:right center;">S / L</div>
<div class="a" style="left:408.63px;top:169.57px;font-size:8.3px;line-height:8.3px;width:19.37px;text-align:right;color:#2a2a2a;transform:scaleX(0.950);transform-origin:right center;">T / P</div>
<div class="a" style="left:471.06px;top:169.57px;font-size:8.3px;line-height:8.3px;width:20.14px;text-align:right;color:#2a2a2a;transform:scaleX(0.950);transform-origin:right center;">Time</div>
<div class="a" style="left:545.59px;top:169.57px;font-size:8.3px;line-height:8.3px;width:20.91px;text-align:right;color:#2a2a2a;transform:scaleX(0.950);transform-origin:right center;">Price</div>
<div class="a" style="left:609.43px;top:169.57px;font-size:8.3px;line-height:8.3px;width:21.37px;text-align:right;color:#2a2a2a;transform:scaleX(0.950);transform-origin:right center;">Profit</div>
<div class="a" style="left:660.52px;top:169.57px;font-size:8.3px;line-height:8.3px;width:31.08px;text-align:right;color:#2a2a2a;transform:scaleX(0.950);transform-origin:right center;">Change</div>
<svg class="a" style="left:500px;top:170.5px" width="8" height="6"><path d="M1.2 4.6 l2.6 -3 l2.6 3z" fill="#333"/></svg>
<div class="bx" style="left:87px;top:167.3px;width:1px;height:11px;background:#e2e2e2;"></div>
<div class="bx" style="left:137px;top:167.3px;width:1px;height:11px;background:#e2e2e2;"></div>
<div class="bx" style="left:176px;top:167.3px;width:1px;height:11px;background:#e2e2e2;"></div>
<div class="bx" style="left:209px;top:167.3px;width:1px;height:11px;background:#e2e2e2;"></div>
<div class="bx" style="left:264px;top:167.3px;width:1px;height:11px;background:#e2e2e2;"></div>
<div class="bx" style="left:320px;top:167.3px;width:1px;height:11px;background:#e2e2e2;"></div>
<div class="bx" style="left:375px;top:167.3px;width:1px;height:11px;background:#e2e2e2;"></div>
<div class="bx" style="left:430px;top:167.3px;width:1px;height:11px;background:#e2e2e2;"></div>
<div class="bx" style="left:513px;top:167.3px;width:1px;height:11px;background:#e2e2e2;"></div>
<div class="bx" style="left:568px;top:167.3px;width:1px;height:11px;background:#e2e2e2;"></div>
<div class="bx" style="left:634px;top:167.3px;width:1px;height:11px;background:#e2e2e2;"></div>
<div class="bx" style="left:14.5px;top:178.7px;width:681.2px;height:12.7px;background:#ffffff;"></div>
<div class="bx" style="left:320.6px;top:178.7px;width:54.799999999999955px;height:12.7px;background:#f5a3a3;"></div>
<div class="bx" style="left:87px;top:178.7px;width:1px;height:12.7px;background:#dddddd;"></div>
<div class="bx" style="left:137px;top:178.7px;width:1px;height:12.7px;background:#dddddd;"></div>
<div class="bx" style="left:176px;top:178.7px;width:1px;height:12.7px;background:#dddddd;"></div>
<div class="bx" style="left:209px;top:178.7px;width:1px;height:12.7px;background:#dddddd;"></div>
<div class="bx" style="left:264px;top:178.7px;width:1px;height:12.7px;background:#dddddd;"></div>
<div class="bx" style="left:320px;top:178.7px;width:1px;height:12.7px;background:#dddddd;"></div>
<div class="bx" style="left:375px;top:178.7px;width:1px;height:12.7px;background:#dddddd;"></div>
<div class="bx" style="left:430px;top:178.7px;width:1px;height:12.7px;background:#dddddd;"></div>
<div class="bx" style="left:513px;top:178.7px;width:1px;height:12.7px;background:#dddddd;"></div>
<div class="bx" style="left:568px;top:178.7px;width:1px;height:12.7px;background:#dddddd;"></div>
<div class="bx" style="left:634px;top:178.7px;width:1px;height:12.7px;background:#dddddd;"></div>
<svg class="a" style="left:17.5px;top:180.20px" width="9" height="10"><rect x="1" y="0.7" width="6.6" height="8.4" rx="0.6" fill="#fff" stroke="#5a93cc" stroke-width="1.05"/><path d="M3 3.2 h2.6 M3 5.2 h2.6" stroke="#5a93cc" stroke-width="0.9" opacity="0.8"/></svg>
<div class="a" style="left:29.20px;top:181.30px;font-size:8.5px;line-height:8.5px;width:69.90px;color:#262626;transform:scaleX(0.814);transform-origin:left center;">2025.06.27 11:2...</div>
<div class="a" style="left:106.29px;top:181.30px;font-size:8.5px;line-height:8.5px;width:29.41px;text-align:right;color:#262626;transform:scaleX(0.847);transform-origin:right center;">xauusd</div>
<div class="a" style="left:130.75px;top:181.30px;font-size:8.5px;line-height:8.5px;width:44.55px;text-align:right;color:#262626;transform:scaleX(0.791);transform-origin:right center;">120172034</div>
<div class="a" style="left:191.70px;top:181.30px;font-size:8.5px;line-height:8.5px;width:15.70px;text-align:right;color:#262626;transform:scaleX(0.847);transform-origin:right center;">buy</div>
<div class="a" style="left:249.48px;top:181.30px;font-size:8.5px;line-height:8.5px;width:13.82px;text-align:right;color:#262626;transform:scaleX(0.791);transform-origin:right center;">0.1</div>
<div class="a" style="left:286.37px;top:181.30px;font-size:8.5px;line-height:8.5px;width:32.73px;text-align:right;color:#262626;transform:scaleX(0.791);transform-origin:right center;">3284.03</div>
<div class="a" style="left:341.47px;top:181.30px;font-size:8.5px;line-height:8.5px;width:32.73px;text-align:right;color:#262626;transform:scaleX(0.791);transform-origin:right center;">3284.04</div>
<div class="a" style="left:396.57px;top:181.30px;font-size:8.5px;line-height:8.5px;width:32.73px;text-align:right;color:#262626;transform:scaleX(0.791);transform-origin:right center;">3314.25</div>
<div class="a" style="left:431.71px;top:181.30px;font-size:8.5px;line-height:8.5px;width:79.99px;text-align:right;color:#262626;transform:scaleX(0.811);transform-origin:right center;">2025.06.27 13:43:02</div>
<div class="a" style="left:534.47px;top:181.30px;font-size:8.5px;line-height:8.5px;width:32.73px;text-align:right;color:#262626;transform:scaleX(0.791);transform-origin:right center;">3284.03</div>
<div class="a" style="left:613.96px;top:181.30px;font-size:8.5px;line-height:8.5px;width:18.54px;text-align:right;color:#262626;transform:scaleX(0.791);transform-origin:right center;">0.00</div>
<div class="a" style="left:664.94px;top:181.30px;font-size:8.5px;line-height:8.5px;width:28.46px;text-align:right;color:#262626;transform:scaleX(0.791);transform-origin:right center;">0.00 %</div>
<div class="bx" style="left:14.5px;top:191.4px;width:681.2px;height:12.7px;background:#e8e8e8;"></div>
<div class="bx" style="left:320.6px;top:191.4px;width:54.799999999999955px;height:12.7px;background:#f5a3a3;"></div>
<div class="bx" style="left:87px;top:191.4px;width:1px;height:12.7px;background:#dddddd;"></div>
<div class="bx" style="left:137px;top:191.4px;width:1px;height:12.7px;background:#dddddd;"></div>
<div class="bx" style="left:176px;top:191.4px;width:1px;height:12.7px;background:#dddddd;"></div>
<div class="bx" style="left:209px;top:191.4px;width:1px;height:12.7px;background:#dddddd;"></div>
<div class="bx" style="left:264px;top:191.4px;width:1px;height:12.7px;background:#dddddd;"></div>
<div class="bx" style="left:320px;top:191.4px;width:1px;height:12.7px;background:#dddddd;"></div>
<div class="bx" style="left:375px;top:191.4px;width:1px;height:12.7px;background:#dddddd;"></div>
<div class="bx" style="left:430px;top:191.4px;width:1px;height:12.7px;background:#dddddd;"></div>
<div class="bx" style="left:513px;top:191.4px;width:1px;height:12.7px;background:#dddddd;"></div>
<div class="bx" style="left:568px;top:191.4px;width:1px;height:12.7px;background:#dddddd;"></div>
<div class="bx" style="left:634px;top:191.4px;width:1px;height:12.7px;background:#dddddd;"></div>
<svg class="a" style="left:17.5px;top:192.90px" width="9" height="10"><rect x="1" y="0.7" width="6.6" height="8.4" rx="0.6" fill="#fff" stroke="#5a93cc" stroke-width="1.05"/><path d="M3 3.2 h2.6 M3 5.2 h2.6" stroke="#5a93cc" stroke-width="0.9" opacity="0.8"/></svg>
<div class="a" style="left:29.20px;top:194.00px;font-size:8.5px;line-height:8.5px;width:69.90px;color:#262626;transform:scaleX(0.814);transform-origin:left center;">2025.06.27 11:2...</div>
<div class="a" style="left:106.29px;top:194.00px;font-size:8.5px;line-height:8.5px;width:29.41px;text-align:right;color:#262626;transform:scaleX(0.847);transform-origin:right center;">xauusd</div>
<div class="a" style="left:130.75px;top:194.00px;font-size:8.5px;line-height:8.5px;width:44.55px;text-align:right;color:#262626;transform:scaleX(0.791);transform-origin:right center;">120172050</div>
<div class="a" style="left:191.70px;top:194.00px;font-size:8.5px;line-height:8.5px;width:15.70px;text-align:right;color:#262626;transform:scaleX(0.847);transform-origin:right center;">buy</div>
<div class="a" style="left:249.48px;top:194.00px;font-size:8.5px;line-height:8.5px;width:13.82px;text-align:right;color:#262626;transform:scaleX(0.791);transform-origin:right center;">0.1</div>
<div class="a" style="left:286.37px;top:194.00px;font-size:8.5px;line-height:8.5px;width:32.73px;text-align:right;color:#262626;transform:scaleX(0.791);transform-origin:right center;">3283.85</div>
<div class="a" style="left:341.47px;top:194.00px;font-size:8.5px;line-height:8.5px;width:32.73px;text-align:right;color:#262626;transform:scaleX(0.791);transform-origin:right center;">3284.04</div>
<div class="a" style="left:396.57px;top:194.00px;font-size:8.5px;line-height:8.5px;width:32.73px;text-align:right;color:#262626;transform:scaleX(0.791);transform-origin:right center;">3314.14</div>
<div class="a" style="left:431.71px;top:194.00px;font-size:8.5px;line-height:8.5px;width:79.99px;text-align:right;color:#262626;transform:scaleX(0.811);transform-origin:right center;">2025.06.27 13:43:02</div>
<div class="a" style="left:534.47px;top:194.00px;font-size:8.5px;line-height:8.5px;width:32.73px;text-align:right;color:#262626;transform:scaleX(0.791);transform-origin:right center;">3284.03</div>
<div class="a" style="left:613.96px;top:194.00px;font-size:8.5px;line-height:8.5px;width:18.54px;text-align:right;color:#1c1ce6;transform:scaleX(0.791);transform-origin:right center;">1.80</div>
<div class="a" style="left:664.94px;top:194.00px;font-size:8.5px;line-height:8.5px;width:28.46px;text-align:right;color:#1c1ce6;transform:scaleX(0.791);transform-origin:right center;">0.01 %</div>
<div class="bx" style="left:14.5px;top:204.1px;width:681.2px;height:12.7px;background:#ffffff;"></div>
<div class="bx" style="left:320.6px;top:204.1px;width:54.799999999999955px;height:12.7px;background:#f5a3a3;"></div>
<div class="bx" style="left:87px;top:204.1px;width:1px;height:12.7px;background:#dddddd;"></div>
<div class="bx" style="left:137px;top:204.1px;width:1px;height:12.7px;background:#dddddd;"></div>
<div class="bx" style="left:176px;top:204.1px;width:1px;height:12.7px;background:#dddddd;"></div>
<div class="bx" style="left:209px;top:204.1px;width:1px;height:12.7px;background:#dddddd;"></div>
<div class="bx" style="left:264px;top:204.1px;width:1px;height:12.7px;background:#dddddd;"></div>
<div class="bx" style="left:320px;top:204.1px;width:1px;height:12.7px;background:#dddddd;"></div>
<div class="bx" style="left:375px;top:204.1px;width:1px;height:12.7px;background:#dddddd;"></div>
<div class="bx" style="left:430px;top:204.1px;width:1px;height:12.7px;background:#dddddd;"></div>
<div class="bx" style="left:513px;top:204.1px;width:1px;height:12.7px;background:#dddddd;"></div>
<div class="bx" style="left:568px;top:204.1px;width:1px;height:12.7px;background:#dddddd;"></div>
<div class="bx" style="left:634px;top:204.1px;width:1px;height:12.7px;background:#dddddd;"></div>
<svg class="a" style="left:17.5px;top:205.60px" width="9" height="10"><rect x="1" y="0.7" width="6.6" height="8.4" rx="0.6" fill="#fff" stroke="#5a93cc" stroke-width="1.05"/><path d="M3 3.2 h2.6 M3 5.2 h2.6" stroke="#5a93cc" stroke-width="0.9" opacity="0.8"/></svg>
<div class="a" style="left:29.20px;top:206.70px;font-size:8.5px;line-height:8.5px;width:70.53px;color:#262626;transform:scaleX(0.814);transform-origin:left center;">2025.06.27 12:5...</div>
<div class="a" style="left:106.29px;top:206.70px;font-size:8.5px;line-height:8.5px;width:29.41px;text-align:right;color:#262626;transform:scaleX(0.847);transform-origin:right center;">xauusd</div>
<div class="a" style="left:130.75px;top:206.70px;font-size:8.5px;line-height:8.5px;width:44.55px;text-align:right;color:#262626;transform:scaleX(0.791);transform-origin:right center;">120180943</div>
<div class="a" style="left:191.70px;top:206.70px;font-size:8.5px;line-height:8.5px;width:15.70px;text-align:right;color:#262626;transform:scaleX(0.847);transform-origin:right center;">buy</div>
<div class="a" style="left:249.48px;top:206.70px;font-size:8.5px;line-height:8.5px;width:13.82px;text-align:right;color:#262626;transform:scaleX(0.791);transform-origin:right center;">0.1</div>
<div class="a" style="left:286.37px;top:206.70px;font-size:8.5px;line-height:8.5px;width:32.73px;text-align:right;color:#262626;transform:scaleX(0.791);transform-origin:right center;">3282.91</div>
<div class="a" style="left:341.47px;top:206.70px;font-size:8.5px;line-height:8.5px;width:32.73px;text-align:right;color:#262626;transform:scaleX(0.791);transform-origin:right center;">3284.04</div>
<div class="a" style="left:396.57px;top:206.70px;font-size:8.5px;line-height:8.5px;width:32.73px;text-align:right;color:#262626;transform:scaleX(0.791);transform-origin:right center;">3314.14</div>
<div class="a" style="left:431.71px;top:206.70px;font-size:8.5px;line-height:8.5px;width:79.99px;text-align:right;color:#262626;transform:scaleX(0.811);transform-origin:right center;">2025.06.27 13:43:02</div>
<div class="a" style="left:534.47px;top:206.70px;font-size:8.5px;line-height:8.5px;width:32.73px;text-align:right;color:#262626;transform:scaleX(0.791);transform-origin:right center;">3284.03</div>
<div class="a" style="left:609.86px;top:206.70px;font-size:8.5px;line-height:8.5px;width:22.64px;text-align:right;color:#1c1ce6;transform:scaleX(0.791);transform-origin:right center;">11.20</div>
<div class="a" style="left:664.94px;top:206.70px;font-size:8.5px;line-height:8.5px;width:28.46px;text-align:right;color:#1c1ce6;transform:scaleX(0.791);transform-origin:right center;">0.03 %</div>
<div class="bx" style="left:14.5px;top:216.8px;width:681.2px;height:12.7px;background:#e8e8e8;"></div>
<div class="bx" style="left:87px;top:216.8px;width:1px;height:12.7px;background:#dddddd;"></div>
<div class="bx" style="left:137px;top:216.8px;width:1px;height:12.7px;background:#dddddd;"></div>
<div class="bx" style="left:176px;top:216.8px;width:1px;height:12.7px;background:#dddddd;"></div>
<div class="bx" style="left:209px;top:216.8px;width:1px;height:12.7px;background:#dddddd;"></div>
<div class="bx" style="left:264px;top:216.8px;width:1px;height:12.7px;background:#dddddd;"></div>
<div class="bx" style="left:320px;top:216.8px;width:1px;height:12.7px;background:#dddddd;"></div>
<div class="bx" style="left:375px;top:216.8px;width:1px;height:12.7px;background:#dddddd;"></div>
<div class="bx" style="left:430px;top:216.8px;width:1px;height:12.7px;background:#dddddd;"></div>
<div class="bx" style="left:513px;top:216.8px;width:1px;height:12.7px;background:#dddddd;"></div>
<div class="bx" style="left:568px;top:216.8px;width:1px;height:12.7px;background:#dddddd;"></div>
<div class="bx" style="left:634px;top:216.8px;width:1px;height:12.7px;background:#dddddd;"></div>
<svg class="a" style="left:17.5px;top:218.30px" width="9" height="10"><rect x="1" y="0.7" width="6.6" height="8.4" rx="0.6" fill="#fff" stroke="#5a93cc" stroke-width="1.05"/><path d="M3 3.2 h2.6 M3 5.2 h2.6" stroke="#5a93cc" stroke-width="0.9" opacity="0.8"/></svg>
<div class="a" style="left:29.20px;top:219.40px;font-size:8.5px;line-height:8.5px;width:70.53px;color:#262626;transform:scaleX(0.814);transform-origin:left center;">2025.06.27 14:3...</div>
<div class="a" style="left:106.29px;top:219.40px;font-size:8.5px;line-height:8.5px;width:29.41px;text-align:right;color:#262626;transform:scaleX(0.847);transform-origin:right center;">xauusd</div>
<div class="a" style="left:130.75px;top:219.40px;font-size:8.5px;line-height:8.5px;width:44.55px;text-align:right;color:#262626;transform:scaleX(0.791);transform-origin:right center;">120192284</div>
<div class="a" style="left:191.70px;top:219.40px;font-size:8.5px;line-height:8.5px;width:15.70px;text-align:right;color:#262626;transform:scaleX(0.847);transform-origin:right center;">buy</div>
<div class="a" style="left:249.48px;top:219.40px;font-size:8.5px;line-height:8.5px;width:13.82px;text-align:right;color:#262626;transform:scaleX(0.791);transform-origin:right center;">0.1</div>
<div class="a" style="left:286.37px;top:219.40px;font-size:8.5px;line-height:8.5px;width:32.73px;text-align:right;color:#262626;transform:scaleX(0.791);transform-origin:right center;">3282.27</div>
<div class="a" style="left:431.71px;top:219.40px;font-size:8.5px;line-height:8.5px;width:79.99px;text-align:right;color:#262626;transform:scaleX(0.811);transform-origin:right center;">2025.06.27 14:37:23</div>
<div class="a" style="left:534.47px;top:219.40px;font-size:8.5px;line-height:8.5px;width:32.73px;text-align:right;color:#262626;transform:scaleX(0.791);transform-origin:right center;">3280.66</div>
<div class="a" style="left:606.40px;top:219.40px;font-size:8.5px;line-height:8.5px;width:26.10px;text-align:right;color:#e62222;transform:scaleX(0.791);transform-origin:right center;">-16.10</div>
<div class="a" style="left:662.11px;top:219.40px;font-size:8.5px;line-height:8.5px;width:31.29px;text-align:right;color:#e62222;transform:scaleX(0.791);transform-origin:right center;">-0.05 %</div>
<div class="bx" style="left:14.5px;top:229.5px;width:681.2px;height:12.7px;background:#ffffff;"></div>
<div class="bx" style="left:87px;top:229.5px;width:1px;height:12.7px;background:#dddddd;"></div>
<div class="bx" style="left:137px;top:229.5px;width:1px;height:12.7px;background:#dddddd;"></div>
<div class="bx" style="left:176px;top:229.5px;width:1px;height:12.7px;background:#dddddd;"></div>
<div class="bx" style="left:209px;top:229.5px;width:1px;height:12.7px;background:#dddddd;"></div>
<div class="bx" style="left:264px;top:229.5px;width:1px;height:12.7px;background:#dddddd;"></div>
<div class="bx" style="left:320px;top:229.5px;width:1px;height:12.7px;background:#dddddd;"></div>
<div class="bx" style="left:375px;top:229.5px;width:1px;height:12.7px;background:#dddddd;"></div>
<div class="bx" style="left:430px;top:229.5px;width:1px;height:12.7px;background:#dddddd;"></div>
<div class="bx" style="left:513px;top:229.5px;width:1px;height:12.7px;background:#dddddd;"></div>
<div class="bx" style="left:568px;top:229.5px;width:1px;height:12.7px;background:#dddddd;"></div>
<div class="bx" style="left:634px;top:229.5px;width:1px;height:12.7px;background:#dddddd;"></div>
<svg class="a" style="left:17.5px;top:231.00px" width="9" height="10"><rect x="1" y="0.7" width="6.6" height="8.4" rx="0.6" fill="#fff" stroke="#5a93cc" stroke-width="1.05"/><path d="M3 3.2 h2.6 M3 5.2 h2.6" stroke="#5a93cc" stroke-width="0.9" opacity="0.8"/></svg>
<div class="a" style="left:29.20px;top:232.10px;font-size:8.5px;line-height:8.5px;width:70.53px;color:#262626;transform:scaleX(0.814);transform-origin:left center;">2025.06.27 14:3...</div>
<div class="a" style="left:106.29px;top:232.10px;font-size:8.5px;line-height:8.5px;width:29.41px;text-align:right;color:#262626;transform:scaleX(0.847);transform-origin:right center;">xauusd</div>
<div class="a" style="left:130.75px;top:232.10px;font-size:8.5px;line-height:8.5px;width:44.55px;text-align:right;color:#262626;transform:scaleX(0.791);transform-origin:right center;">120192195</div>
<div class="a" style="left:191.70px;top:232.10px;font-size:8.5px;line-height:8.5px;width:15.70px;text-align:right;color:#262626;transform:scaleX(0.847);transform-origin:right center;">buy</div>
<div class="a" style="left:249.48px;top:232.10px;font-size:8.5px;line-height:8.5px;width:13.82px;text-align:right;color:#262626;transform:scaleX(0.791);transform-origin:right center;">0.1</div>
<div class="a" style="left:286.37px;top:232.10px;font-size:8.5px;line-height:8.5px;width:32.73px;text-align:right;color:#262626;transform:scaleX(0.791);transform-origin:right center;">3282.57</div>
<div class="a" style="left:431.71px;top:232.10px;font-size:8.5px;line-height:8.5px;width:79.99px;text-align:right;color:#262626;transform:scaleX(0.811);transform-origin:right center;">2025.06.27 14:37:24</div>
<div class="a" style="left:534.47px;top:232.10px;font-size:8.5px;line-height:8.5px;width:32.73px;text-align:right;color:#262626;transform:scaleX(0.791);transform-origin:right center;">3280.79</div>
<div class="a" style="left:606.40px;top:232.10px;font-size:8.5px;line-height:8.5px;width:26.10px;text-align:right;color:#e62222;transform:scaleX(0.791);transform-origin:right center;">-17.80</div>
<div class="a" style="left:662.11px;top:232.10px;font-size:8.5px;line-height:8.5px;width:31.29px;text-align:right;color:#e62222;transform:scaleX(0.791);transform-origin:right center;">-0.05 %</div>
<div class="bx" style="left:14.5px;top:242.2px;width:681.2px;height:12.7px;background:#e8e8e8;"></div>
<div class="bx" style="left:87px;top:242.2px;width:1px;height:12.7px;background:#dddddd;"></div>
<div class="bx" style="left:137px;top:242.2px;width:1px;height:12.7px;background:#dddddd;"></div>
<div class="bx" style="left:176px;top:242.2px;width:1px;height:12.7px;background:#dddddd;"></div>
<div class="bx" style="left:209px;top:242.2px;width:1px;height:12.7px;background:#dddddd;"></div>
<div class="bx" style="left:264px;top:242.2px;width:1px;height:12.7px;background:#dddddd;"></div>
<div class="bx" style="left:320px;top:242.2px;width:1px;height:12.7px;background:#dddddd;"></div>
<div class="bx" style="left:375px;top:242.2px;width:1px;height:12.7px;background:#dddddd;"></div>
<div class="bx" style="left:430px;top:242.2px;width:1px;height:12.7px;background:#dddddd;"></div>
<div class="bx" style="left:513px;top:242.2px;width:1px;height:12.7px;background:#dddddd;"></div>
<div class="bx" style="left:568px;top:242.2px;width:1px;height:12.7px;background:#dddddd;"></div>
<div class="bx" style="left:634px;top:242.2px;width:1px;height:12.7px;background:#dddddd;"></div>
<svg class="a" style="left:17.5px;top:243.70px" width="9" height="10"><rect x="1" y="0.7" width="6.6" height="8.4" rx="0.6" fill="#fff" stroke="#5a93cc" stroke-width="1.05"/><path d="M3 3.2 h2.6 M3 5.2 h2.6" stroke="#5a93cc" stroke-width="0.9" opacity="0.8"/></svg>
<div class="a" style="left:29.20px;top:244.80px;font-size:8.5px;line-height:8.5px;width:70.53px;color:#262626;transform:scaleX(0.814);transform-origin:left center;">2025.06.27 14:2...</div>
<div class="a" style="left:106.29px;top:244.80px;font-size:8.5px;line-height:8.5px;width:29.41px;text-align:right;color:#262626;transform:scaleX(0.847);transform-origin:right center;">xauusd</div>
<div class="a" style="left:130.75px;top:244.80px;font-size:8.5px;line-height:8.5px;width:44.55px;text-align:right;color:#262626;transform:scaleX(0.791);transform-origin:right center;">120191683</div>
<div class="a" style="left:191.70px;top:244.80px;font-size:8.5px;line-height:8.5px;width:15.70px;text-align:right;color:#262626;transform:scaleX(0.847);transform-origin:right center;">buy</div>
<div class="a" style="left:249.48px;top:244.80px;font-size:8.5px;line-height:8.5px;width:13.82px;text-align:right;color:#262626;transform:scaleX(0.791);transform-origin:right center;">0.1</div>
<div class="a" style="left:286.37px;top:244.80px;font-size:8.5px;line-height:8.5px;width:32.73px;text-align:right;color:#262626;transform:scaleX(0.791);transform-origin:right center;">3282.82</div>
<div class="a" style="left:396.57px;top:244.80px;font-size:8.5px;line-height:8.5px;width:32.73px;text-align:right;color:#262626;transform:scaleX(0.791);transform-origin:right center;">3294.26</div>
<div class="a" style="left:431.71px;top:244.80px;font-size:8.5px;line-height:8.5px;width:79.99px;text-align:right;color:#262626;transform:scaleX(0.811);transform-origin:right center;">2025.06.27 14:37:25</div>
<div class="a" style="left:534.47px;top:244.80px;font-size:8.5px;line-height:8.5px;width:32.73px;text-align:right;color:#262626;transform:scaleX(0.791);transform-origin:right center;">3280.86</div>
<div class="a" style="left:606.40px;top:244.80px;font-size:8.5px;line-height:8.5px;width:26.10px;text-align:right;color:#e62222;transform:scaleX(0.791);transform-origin:right center;">-19.60</div>
<div class="a" style="left:662.11px;top:244.80px;font-size:8.5px;line-height:8.5px;width:31.29px;text-align:right;color:#e62222;transform:scaleX(0.791);transform-origin:right center;">-0.06 %</div>
<div class="bx" style="left:14.5px;top:254.9px;width:681.2px;height:12.7px;background:#ffffff;"></div>
<div class="bx" style="left:87px;top:254.9px;width:1px;height:12.7px;background:#dddddd;"></div>
<div class="bx" style="left:137px;top:254.9px;width:1px;height:12.7px;background:#dddddd;"></div>
<div class="bx" style="left:176px;top:254.9px;width:1px;height:12.7px;background:#dddddd;"></div>
<div class="bx" style="left:209px;top:254.9px;width:1px;height:12.7px;background:#dddddd;"></div>
<div class="bx" style="left:264px;top:254.9px;width:1px;height:12.7px;background:#dddddd;"></div>
<div class="bx" style="left:320px;top:254.9px;width:1px;height:12.7px;background:#dddddd;"></div>
<div class="bx" style="left:375px;top:254.9px;width:1px;height:12.7px;background:#dddddd;"></div>
<div class="bx" style="left:430px;top:254.9px;width:1px;height:12.7px;background:#dddddd;"></div>
<div class="bx" style="left:513px;top:254.9px;width:1px;height:12.7px;background:#dddddd;"></div>
<div class="bx" style="left:568px;top:254.9px;width:1px;height:12.7px;background:#dddddd;"></div>
<div class="bx" style="left:634px;top:254.9px;width:1px;height:12.7px;background:#dddddd;"></div>
<svg class="a" style="left:17.5px;top:256.40px" width="9" height="10"><rect x="1" y="0.7" width="6.6" height="8.4" rx="0.6" fill="#fff" stroke="#5a93cc" stroke-width="1.05"/><path d="M3 3.2 h2.6 M3 5.2 h2.6" stroke="#5a93cc" stroke-width="0.9" opacity="0.8"/></svg>
<div class="a" style="left:29.20px;top:257.50px;font-size:8.5px;line-height:8.5px;width:70.53px;color:#262626;transform:scaleX(0.814);transform-origin:left center;">2025.06.27 14:3...</div>
<div class="a" style="left:106.29px;top:257.50px;font-size:8.5px;line-height:8.5px;width:29.41px;text-align:right;color:#262626;transform:scaleX(0.847);transform-origin:right center;">xauusd</div>
<div class="a" style="left:130.75px;top:257.50px;font-size:8.5px;line-height:8.5px;width:44.55px;text-align:right;color:#262626;transform:scaleX(0.791);transform-origin:right center;">120192137</div>
<div class="a" style="left:191.70px;top:257.50px;font-size:8.5px;line-height:8.5px;width:15.70px;text-align:right;color:#262626;transform:scaleX(0.847);transform-origin:right center;">buy</div>
<div class="a" style="left:249.48px;top:257.50px;font-size:8.5px;line-height:8.5px;width:13.82px;text-align:right;color:#262626;transform:scaleX(0.791);transform-origin:right center;">0.1</div>
<div class="a" style="left:286.37px;top:257.50px;font-size:8.5px;line-height:8.5px;width:32.73px;text-align:right;color:#262626;transform:scaleX(0.791);transform-origin:right center;">3283.05</div>
<div class="a" style="left:431.71px;top:257.50px;font-size:8.5px;line-height:8.5px;width:79.99px;text-align:right;color:#262626;transform:scaleX(0.811);transform-origin:right center;">2025.06.27 14:37:28</div>
<div class="a" style="left:534.47px;top:257.50px;font-size:8.5px;line-height:8.5px;width:32.73px;text-align:right;color:#262626;transform:scaleX(0.791);transform-origin:right center;">3281.28</div>
<div class="a" style="left:606.40px;top:257.50px;font-size:8.5px;line-height:8.5px;width:26.10px;text-align:right;color:#e62222;transform:scaleX(0.791);transform-origin:right center;">-17.70</div>
<div class="a" style="left:662.11px;top:257.50px;font-size:8.5px;line-height:8.5px;width:31.29px;text-align:right;color:#e62222;transform:scaleX(0.791);transform-origin:right center;">-0.05 %</div>
<div class="bx" style="left:14.5px;top:267.6px;width:681.2px;height:12.7px;background:#e8e8e8;"></div>
<div class="bx" style="left:87px;top:267.6px;width:1px;height:12.7px;background:#dddddd;"></div>
<div class="bx" style="left:137px;top:267.6px;width:1px;height:12.7px;background:#dddddd;"></div>
<div class="bx" style="left:176px;top:267.6px;width:1px;height:12.7px;background:#dddddd;"></div>
<div class="bx" style="left:209px;top:267.6px;width:1px;height:12.7px;background:#dddddd;"></div>
<div class="bx" style="left:264px;top:267.6px;width:1px;height:12.7px;background:#dddddd;"></div>
<div class="bx" style="left:320px;top:267.6px;width:1px;height:12.7px;background:#dddddd;"></div>
<div class="bx" style="left:375px;top:267.6px;width:1px;height:12.7px;background:#dddddd;"></div>
<div class="bx" style="left:430px;top:267.6px;width:1px;height:12.7px;background:#dddddd;"></div>
<div class="bx" style="left:513px;top:267.6px;width:1px;height:12.7px;background:#dddddd;"></div>
<div class="bx" style="left:568px;top:267.6px;width:1px;height:12.7px;background:#dddddd;"></div>
<div class="bx" style="left:634px;top:267.6px;width:1px;height:12.7px;background:#dddddd;"></div>
<svg class="a" style="left:17.5px;top:269.10px" width="9" height="10"><rect x="1" y="0.7" width="6.6" height="8.4" rx="0.6" fill="#fff" stroke="#5a93cc" stroke-width="1.05"/><path d="M3 3.2 h2.6 M3 5.2 h2.6" stroke="#5a93cc" stroke-width="0.9" opacity="0.8"/></svg>
<div class="a" style="left:29.20px;top:270.20px;font-size:8.5px;line-height:8.5px;width:70.53px;color:#262626;transform:scaleX(0.814);transform-origin:left center;">2025.06.27 14:1...</div>
<div class="a" style="left:106.29px;top:270.20px;font-size:8.5px;line-height:8.5px;width:29.41px;text-align:right;color:#262626;transform:scaleX(0.847);transform-origin:right center;">xauusd</div>
<div class="a" style="left:130.75px;top:270.20px;font-size:8.5px;line-height:8.5px;width:44.55px;text-align:right;color:#262626;transform:scaleX(0.791);transform-origin:right center;">120191230</div>
<div class="a" style="left:191.70px;top:270.20px;font-size:8.5px;line-height:8.5px;width:15.70px;text-align:right;color:#262626;transform:scaleX(0.847);transform-origin:right center;">buy</div>
<div class="a" style="left:249.48px;top:270.20px;font-size:8.5px;line-height:8.5px;width:13.82px;text-align:right;color:#262626;transform:scaleX(0.791);transform-origin:right center;">0.1</div>
<div class="a" style="left:286.37px;top:270.20px;font-size:8.5px;line-height:8.5px;width:32.73px;text-align:right;color:#262626;transform:scaleX(0.791);transform-origin:right center;">3283.95</div>
<div class="a" style="left:396.57px;top:270.20px;font-size:8.5px;line-height:8.5px;width:32.73px;text-align:right;color:#262626;transform:scaleX(0.791);transform-origin:right center;">3294.14</div>
<div class="a" style="left:431.71px;top:270.20px;font-size:8.5px;line-height:8.5px;width:79.99px;text-align:right;color:#262626;transform:scaleX(0.811);transform-origin:right center;">2025.06.27 14:37:30</div>
<div class="a" style="left:534.47px;top:270.20px;font-size:8.5px;line-height:8.5px;width:32.73px;text-align:right;color:#262626;transform:scaleX(0.791);transform-origin:right center;">3281.30</div>
<div class="a" style="left:606.40px;top:270.20px;font-size:8.5px;line-height:8.5px;width:26.10px;text-align:right;color:#e62222;transform:scaleX(0.791);transform-origin:right center;">-26.50</div>
<div class="a" style="left:662.11px;top:270.20px;font-size:8.5px;line-height:8.5px;width:31.29px;text-align:right;color:#e62222;transform:scaleX(0.791);transform-origin:right center;">-0.08 %</div>
<div class="bx" style="left:14.5px;top:280.3px;width:681.2px;height:12.7px;background:#ffffff;"></div>
<div class="bx" style="left:87px;top:280.3px;width:1px;height:12.7px;background:#dddddd;"></div>
<div class="bx" style="left:137px;top:280.3px;width:1px;height:12.7px;background:#dddddd;"></div>
<div class="bx" style="left:176px;top:280.3px;width:1px;height:12.7px;background:#dddddd;"></div>
<div class="bx" style="left:209px;top:280.3px;width:1px;height:12.7px;background:#dddddd;"></div>
<div class="bx" style="left:264px;top:280.3px;width:1px;height:12.7px;background:#dddddd;"></div>
<div class="bx" style="left:320px;top:280.3px;width:1px;height:12.7px;background:#dddddd;"></div>
<div class="bx" style="left:375px;top:280.3px;width:1px;height:12.7px;background:#dddddd;"></div>
<div class="bx" style="left:430px;top:280.3px;width:1px;height:12.7px;background:#dddddd;"></div>
<div class="bx" style="left:513px;top:280.3px;width:1px;height:12.7px;background:#dddddd;"></div>
<div class="bx" style="left:568px;top:280.3px;width:1px;height:12.7px;background:#dddddd;"></div>
<div class="bx" style="left:634px;top:280.3px;width:1px;height:12.7px;background:#dddddd;"></div>
<svg class="a" style="left:17.5px;top:281.80px" width="9" height="10"><rect x="1" y="0.7" width="6.6" height="8.4" rx="0.6" fill="#fff" stroke="#5a93cc" stroke-width="1.05"/><path d="M3 3.2 h2.6 M3 5.2 h2.6" stroke="#5a93cc" stroke-width="0.9" opacity="0.8"/></svg>
<div class="a" style="left:29.20px;top:282.90px;font-size:8.5px;line-height:8.5px;width:70.53px;color:#262626;transform:scaleX(0.814);transform-origin:left center;">2025.06.27 14:3...</div>
<div class="a" style="left:106.29px;top:282.90px;font-size:8.5px;line-height:8.5px;width:29.41px;text-align:right;color:#262626;transform:scaleX(0.847);transform-origin:right center;">xauusd</div>
<div class="a" style="left:130.75px;top:282.90px;font-size:8.5px;line-height:8.5px;width:44.55px;text-align:right;color:#262626;transform:scaleX(0.791);transform-origin:right center;">120191999</div>
<div class="a" style="left:191.70px;top:282.90px;font-size:8.5px;line-height:8.5px;width:15.70px;text-align:right;color:#262626;transform:scaleX(0.847);transform-origin:right center;">buy</div>
<div class="a" style="left:249.48px;top:282.90px;font-size:8.5px;line-height:8.5px;width:13.82px;text-align:right;color:#262626;transform:scaleX(0.791);transform-origin:right center;">0.1</div>
<div class="a" style="left:286.37px;top:282.90px;font-size:8.5px;line-height:8.5px;width:32.73px;text-align:right;color:#262626;transform:scaleX(0.791);transform-origin:right center;">3284.09</div>
<div class="a" style="left:431.71px;top:282.90px;font-size:8.5px;line-height:8.5px;width:79.99px;text-align:right;color:#262626;transform:scaleX(0.811);transform-origin:right center;">2025.06.27 14:37:32</div>
<div class="a" style="left:534.47px;top:282.90px;font-size:8.5px;line-height:8.5px;width:32.73px;text-align:right;color:#262626;transform:scaleX(0.791);transform-origin:right center;">3281.47</div>
<div class="a" style="left:606.40px;top:282.90px;font-size:8.5px;line-height:8.5px;width:26.10px;text-align:right;color:#e62222;transform:scaleX(0.791);transform-origin:right center;">-26.20</div>
<div class="a" style="left:662.11px;top:282.90px;font-size:8.5px;line-height:8.5px;width:31.29px;text-align:right;color:#e62222;transform:scaleX(0.791);transform-origin:right center;">-0.08 %</div>
<div class="bx" style="left:14.5px;top:293.0px;width:681.2px;height:12.7px;background:#e8e8e8;"></div>
<div class="bx" style="left:87px;top:293.0px;width:1px;height:12.7px;background:#dddddd;"></div>
<div class="bx" style="left:137px;top:293.0px;width:1px;height:12.7px;background:#dddddd;"></div>
<div class="bx" style="left:176px;top:293.0px;width:1px;height:12.7px;background:#dddddd;"></div>
<div class="bx" style="left:209px;top:293.0px;width:1px;height:12.7px;background:#dddddd;"></div>
<div class="bx" style="left:264px;top:293.0px;width:1px;height:12.7px;background:#dddddd;"></div>
<div class="bx" style="left:320px;top:293.0px;width:1px;height:12.7px;background:#dddddd;"></div>
<div class="bx" style="left:375px;top:293.0px;width:1px;height:12.7px;background:#dddddd;"></div>
<div class="bx" style="left:430px;top:293.0px;width:1px;height:12.7px;background:#dddddd;"></div>
<div class="bx" style="left:513px;top:293.0px;width:1px;height:12.7px;background:#dddddd;"></div>
<div class="bx" style="left:568px;top:293.0px;width:1px;height:12.7px;background:#dddddd;"></div>
<div class="bx" style="left:634px;top:293.0px;width:1px;height:12.7px;background:#dddddd;"></div>
<svg class="a" style="left:17.5px;top:294.50px" width="9" height="10"><rect x="1" y="0.7" width="6.6" height="8.4" rx="0.6" fill="#fff" stroke="#5a93cc" stroke-width="1.05"/><path d="M3 3.2 h2.6 M3 5.2 h2.6" stroke="#5a93cc" stroke-width="0.9" opacity="0.8"/></svg>
<div class="a" style="left:29.20px;top:295.60px;font-size:8.5px;line-height:8.5px;width:70.53px;color:#262626;transform:scaleX(0.814);transform-origin:left center;">2025.06.27 14:1...</div>
<div class="a" style="left:106.29px;top:295.60px;font-size:8.5px;line-height:8.5px;width:29.41px;text-align:right;color:#262626;transform:scaleX(0.847);transform-origin:right center;">xauusd</div>
<div class="a" style="left:132.65px;top:295.60px;font-size:8.5px;line-height:8.5px;width:42.65px;text-align:right;color:#262626;transform:scaleX(0.791);transform-origin:right center;">120191111</div>
<div class="a" style="left:191.70px;top:295.60px;font-size:8.5px;line-height:8.5px;width:15.70px;text-align:right;color:#262626;transform:scaleX(0.847);transform-origin:right center;">buy</div>
<div class="a" style="left:249.48px;top:295.60px;font-size:8.5px;line-height:8.5px;width:13.82px;text-align:right;color:#262626;transform:scaleX(0.791);transform-origin:right center;">0.1</div>
<div class="a" style="left:286.37px;top:295.60px;font-size:8.5px;line-height:8.5px;width:32.73px;text-align:right;color:#262626;transform:scaleX(0.791);transform-origin:right center;">3284.24</div>
<div class="a" style="left:396.57px;top:295.60px;font-size:8.5px;line-height:8.5px;width:32.73px;text-align:right;color:#262626;transform:scaleX(0.791);transform-origin:right center;">3294.26</div>
<div class="a" style="left:431.71px;top:295.60px;font-size:8.5px;line-height:8.5px;width:79.99px;text-align:right;color:#262626;transform:scaleX(0.811);transform-origin:right center;">2025.06.27 14:37:33</div>
<div class="a" style="left:534.47px;top:295.60px;font-size:8.5px;line-height:8.5px;width:32.73px;text-align:right;color:#262626;transform:scaleX(0.791);transform-origin:right center;">3281.54</div>
<div class="a" style="left:606.40px;top:295.60px;font-size:8.5px;line-height:8.5px;width:26.10px;text-align:right;color:#e62222;transform:scaleX(0.791);transform-origin:right center;">-27.00</div>
<div class="a" style="left:662.11px;top:295.60px;font-size:8.5px;line-height:8.5px;width:31.29px;text-align:right;color:#e62222;transform:scaleX(0.791);transform-origin:right center;">-0.08 %</div>
<div class="bx" style="left:14.5px;top:305.7px;width:681.2px;height:12.7px;background:#ffffff;"></div>
<div class="bx" style="left:87px;top:305.7px;width:1px;height:12.7px;background:#dddddd;"></div>
<div class="bx" style="left:137px;top:305.7px;width:1px;height:12.7px;background:#dddddd;"></div>
<div class="bx" style="left:176px;top:305.7px;width:1px;height:12.7px;background:#dddddd;"></div>
<div class="bx" style="left:209px;top:305.7px;width:1px;height:12.7px;background:#dddddd;"></div>
<div class="bx" style="left:264px;top:305.7px;width:1px;height:12.7px;background:#dddddd;"></div>
<div class="bx" style="left:320px;top:305.7px;width:1px;height:12.7px;background:#dddddd;"></div>
<div class="bx" style="left:375px;top:305.7px;width:1px;height:12.7px;background:#dddddd;"></div>
<div class="bx" style="left:430px;top:305.7px;width:1px;height:12.7px;background:#dddddd;"></div>
<div class="bx" style="left:513px;top:305.7px;width:1px;height:12.7px;background:#dddddd;"></div>
<div class="bx" style="left:568px;top:305.7px;width:1px;height:12.7px;background:#dddddd;"></div>
<div class="bx" style="left:634px;top:305.7px;width:1px;height:12.7px;background:#dddddd;"></div>
<svg class="a" style="left:17.5px;top:307.20px" width="9" height="10"><rect x="1" y="0.7" width="6.6" height="8.4" rx="0.6" fill="#fff" stroke="#5a93cc" stroke-width="1.05"/><path d="M3 3.2 h2.6 M3 5.2 h2.6" stroke="#5a93cc" stroke-width="0.9" opacity="0.8"/></svg>
<div class="a" style="left:29.20px;top:308.30px;font-size:8.5px;line-height:8.5px;width:70.53px;color:#262626;transform:scaleX(0.814);transform-origin:left center;">2025.06.27 14:1...</div>
<div class="a" style="left:106.29px;top:308.30px;font-size:8.5px;line-height:8.5px;width:29.41px;text-align:right;color:#262626;transform:scaleX(0.847);transform-origin:right center;">xauusd</div>
<div class="a" style="left:130.75px;top:308.30px;font-size:8.5px;line-height:8.5px;width:44.55px;text-align:right;color:#262626;transform:scaleX(0.791);transform-origin:right center;">120191061</div>
<div class="a" style="left:191.70px;top:308.30px;font-size:8.5px;line-height:8.5px;width:15.70px;text-align:right;color:#262626;transform:scaleX(0.847);transform-origin:right center;">buy</div>
<div class="a" style="left:249.48px;top:308.30px;font-size:8.5px;line-height:8.5px;width:13.82px;text-align:right;color:#262626;transform:scaleX(0.791);transform-origin:right center;">0.1</div>
<div class="a" style="left:286.37px;top:308.30px;font-size:8.5px;line-height:8.5px;width:32.73px;text-align:right;color:#262626;transform:scaleX(0.791);transform-origin:right center;">3284.69</div>
<div class="a" style="left:396.57px;top:308.30px;font-size:8.5px;line-height:8.5px;width:32.73px;text-align:right;color:#262626;transform:scaleX(0.791);transform-origin:right center;">3294.26</div>
<div class="a" style="left:431.71px;top:308.30px;font-size:8.5px;line-height:8.5px;width:79.99px;text-align:right;color:#262626;transform:scaleX(0.811);transform-origin:right center;">2025.06.27 14:37:35</div>
<div class="a" style="left:534.47px;top:308.30px;font-size:8.5px;line-height:8.5px;width:32.73px;text-align:right;color:#262626;transform:scaleX(0.791);transform-origin:right center;">3281.54</div>
<div class="a" style="left:606.40px;top:308.30px;font-size:8.5px;line-height:8.5px;width:26.10px;text-align:right;color:#e62222;transform:scaleX(0.791);transform-origin:right center;">-31.50</div>
<div class="a" style="left:662.11px;top:308.30px;font-size:8.5px;line-height:8.5px;width:31.29px;text-align:right;color:#e62222;transform:scaleX(0.791);transform-origin:right center;">-0.10 %</div>
<div class="bx" style="left:14.5px;top:318.4px;width:681.2px;height:12.7px;background:#e8e8e8;"></div>
<div class="bx" style="left:87px;top:318.4px;width:1px;height:12.7px;background:#dddddd;"></div>
<div class="bx" style="left:137px;top:318.4px;width:1px;height:12.7px;background:#dddddd;"></div>
<div class="bx" style="left:176px;top:318.4px;width:1px;height:12.7px;background:#dddddd;"></div>
<div class="bx" style="left:209px;top:318.4px;width:1px;height:12.7px;background:#dddddd;"></div>
<div class="bx" style="left:264px;top:318.4px;width:1px;height:12.7px;background:#dddddd;"></div>
<div class="bx" style="left:320px;top:318.4px;width:1px;height:12.7px;background:#dddddd;"></div>
<div class="bx" style="left:375px;top:318.4px;width:1px;height:12.7px;background:#dddddd;"></div>
<div class="bx" style="left:430px;top:318.4px;width:1px;height:12.7px;background:#dddddd;"></div>
<div class="bx" style="left:513px;top:318.4px;width:1px;height:12.7px;background:#dddddd;"></div>
<div class="bx" style="left:568px;top:318.4px;width:1px;height:12.7px;background:#dddddd;"></div>
<div class="bx" style="left:634px;top:318.4px;width:1px;height:12.7px;background:#dddddd;"></div>
<svg class="a" style="left:17.5px;top:319.90px" width="9" height="10"><rect x="1" y="0.7" width="6.6" height="8.4" rx="0.6" fill="#fff" stroke="#5a93cc" stroke-width="1.05"/><path d="M3 3.2 h2.6 M3 5.2 h2.6" stroke="#5a93cc" stroke-width="0.9" opacity="0.8"/></svg>
<div class="a" style="left:29.20px;top:321.00px;font-size:8.5px;line-height:8.5px;width:70.53px;color:#262626;transform:scaleX(0.814);transform-origin:left center;">2025.06.27 14:1...</div>
<div class="a" style="left:106.29px;top:321.00px;font-size:8.5px;line-height:8.5px;width:29.41px;text-align:right;color:#262626;transform:scaleX(0.847);transform-origin:right center;">xauusd</div>
<div class="a" style="left:130.75px;top:321.00px;font-size:8.5px;line-height:8.5px;width:44.55px;text-align:right;color:#262626;transform:scaleX(0.791);transform-origin:right center;">120190587</div>
<div class="a" style="left:191.70px;top:321.00px;font-size:8.5px;line-height:8.5px;width:15.70px;text-align:right;color:#262626;transform:scaleX(0.847);transform-origin:right center;">buy</div>
<div class="a" style="left:249.48px;top:321.00px;font-size:8.5px;line-height:8.5px;width:13.82px;text-align:right;color:#262626;transform:scaleX(0.791);transform-origin:right center;">0.1</div>
<div class="a" style="left:286.37px;top:321.00px;font-size:8.5px;line-height:8.5px;width:32.73px;text-align:right;color:#262626;transform:scaleX(0.791);transform-origin:right center;">3285.16</div>
<div class="a" style="left:396.57px;top:321.00px;font-size:8.5px;line-height:8.5px;width:32.73px;text-align:right;color:#262626;transform:scaleX(0.791);transform-origin:right center;">3294.38</div>
<div class="a" style="left:431.71px;top:321.00px;font-size:8.5px;line-height:8.5px;width:79.99px;text-align:right;color:#262626;transform:scaleX(0.811);transform-origin:right center;">2025.06.27 14:37:36</div>
<div class="a" style="left:534.47px;top:321.00px;font-size:8.5px;line-height:8.5px;width:32.73px;text-align:right;color:#262626;transform:scaleX(0.791);transform-origin:right center;">3281.36</div>
<div class="a" style="left:606.40px;top:321.00px;font-size:8.5px;line-height:8.5px;width:26.10px;text-align:right;color:#e62222;transform:scaleX(0.791);transform-origin:right center;">-38.00</div>
<div class="a" style="left:662.11px;top:321.00px;font-size:8.5px;line-height:8.5px;width:31.29px;text-align:right;color:#e62222;transform:scaleX(0.791);transform-origin:right center;">-0.12 %</div>
<div class="bx" style="left:14.5px;top:331.1px;width:681.2px;height:12.7px;background:#ffffff;"></div>
<div class="bx" style="left:87px;top:331.1px;width:1px;height:12.7px;background:#dddddd;"></div>
<div class="bx" style="left:137px;top:331.1px;width:1px;height:12.7px;background:#dddddd;"></div>
<div class="bx" style="left:176px;top:331.1px;width:1px;height:12.7px;background:#dddddd;"></div>
<div class="bx" style="left:209px;top:331.1px;width:1px;height:12.7px;background:#dddddd;"></div>
<div class="bx" style="left:568px;top:331.1px;width:1px;height:12.7px;background:#dddddd;"></div>
<div class="bx" style="left:634px;top:331.1px;width:1px;height:12.7px;background:#dddddd;"></div>
<svg class="a" style="left:17.6px;top:333.50px" width="9" height="9"><circle cx="4.3" cy="4.3" r="3.3" fill="none" stroke="#2a2a2a" stroke-width="1"/><path d="M2.5 4.3 h3.6" stroke="#2a2a2a" stroke-width="1"/></svg>
<div class="a" style="left:29.20px;top:333.70px;font-size:8.5px;line-height:8.5px;width:70.53px;color:#262626;transform:scaleX(0.814);transform-origin:left center;">2025.06.27 14:3...</div>
<div class="a" style="left:135.48px;top:333.70px;font-size:8.5px;line-height:8.5px;width:39.82px;text-align:right;color:#262626;transform:scaleX(0.791);transform-origin:right center;">48097651</div>
<div class="a" style="left:175.62px;top:333.70px;font-size:8.5px;line-height:8.5px;width:31.78px;text-align:right;color:#262626;transform:scaleX(0.847);transform-origin:right center;">balance</div>
<div class="a" style="left:601.67px;top:333.70px;font-size:8.5px;line-height:8.5px;width:30.83px;text-align:right;color:#262626;transform:scaleX(0.791);transform-origin:right center;">-700.00</div>
<div class="a" style="left:212.10px;top:333.70px;font-size:8.5px;line-height:8.5px;width:113.97px;color:#1a1a1a;transform:scaleX(0.896);transform-origin:left center;">Internal Transfer from Trading</div>
<div class="bx" style="left:14.5px;top:343.8px;width:681.2px;height:12.7px;background:#e8e8e8;"></div>
<div class="bx" style="left:87px;top:343.8px;width:1px;height:12.7px;background:#dddddd;"></div>
<div class="bx" style="left:137px;top:343.8px;width:1px;height:12.7px;background:#dddddd;"></div>
<div class="bx" style="left:176px;top:343.8px;width:1px;height:12.7px;background:#dddddd;"></div>
<div class="bx" style="left:209px;top:343.8px;width:1px;height:12.7px;background:#dddddd;"></div>
<div class="bx" style="left:568px;top:343.8px;width:1px;height:12.7px;background:#dddddd;"></div>
<div class="bx" style="left:634px;top:343.8px;width:1px;height:12.7px;background:#dddddd;"></div>
<svg class="a" style="left:17.6px;top:346.20px" width="9" height="9"><circle cx="4.3" cy="4.3" r="3.3" fill="none" stroke="#2a2a2a" stroke-width="1"/><path d="M2.5 4.3 h3.6" stroke="#2a2a2a" stroke-width="1"/></svg>
<div class="a" style="left:29.20px;top:346.40px;font-size:8.5px;line-height:8.5px;width:70.53px;color:#262626;transform:scaleX(0.814);transform-origin:left center;">2025.06.27 14:4...</div>
<div class="a" style="left:135.48px;top:346.40px;font-size:8.5px;line-height:8.5px;width:39.82px;text-align:right;color:#262626;transform:scaleX(0.791);transform-origin:right center;">48097980</div>
<div class="a" style="left:184.61px;top:346.40px;font-size:8.5px;line-height:8.5px;width:22.79px;text-align:right;color:#262626;transform:scaleX(0.847);transform-origin:right center;">credit</div>
<div class="a" style="left:601.67px;top:346.40px;font-size:8.5px;line-height:8.5px;width:30.83px;text-align:right;color:#262626;transform:scaleX(0.791);transform-origin:right center;">-250.00</div>
<div class="bx" style="left:14.5px;top:356.5px;width:681.2px;height:12.7px;background:#ffffff;"></div>
<div class="bx" style="left:87px;top:356.5px;width:1px;height:12.7px;background:#dddddd;"></div>
<div class="bx" style="left:137px;top:356.5px;width:1px;height:12.7px;background:#dddddd;"></div>
<div class="bx" style="left:176px;top:356.5px;width:1px;height:12.7px;background:#dddddd;"></div>
<div class="bx" style="left:209px;top:356.5px;width:1px;height:12.7px;background:#dddddd;"></div>
<div class="bx" style="left:264px;top:356.5px;width:1px;height:12.7px;background:#dddddd;"></div>
<div class="bx" style="left:320px;top:356.5px;width:1px;height:12.7px;background:#dddddd;"></div>
<div class="bx" style="left:375px;top:356.5px;width:1px;height:12.7px;background:#dddddd;"></div>
<div class="bx" style="left:430px;top:356.5px;width:1px;height:12.7px;background:#dddddd;"></div>
<div class="bx" style="left:513px;top:356.5px;width:1px;height:12.7px;background:#dddddd;"></div>
<div class="bx" style="left:568px;top:356.5px;width:1px;height:12.7px;background:#dddddd;"></div>
<div class="bx" style="left:634px;top:356.5px;width:1px;height:12.7px;background:#dddddd;"></div>
<svg class="a" style="left:17.5px;top:358.00px" width="9" height="10"><rect x="1" y="0.7" width="6.6" height="8.4" rx="0.6" fill="#fff" stroke="#5a93cc" stroke-width="1.05"/><path d="M3 3.2 h2.6 M3 5.2 h2.6" stroke="#5a93cc" stroke-width="0.9" opacity="0.8"/></svg>
<div class="a" style="left:29.20px;top:359.10px;font-size:8.5px;line-height:8.5px;width:70.53px;color:#262626;transform:scaleX(0.814);transform-origin:left center;">2025.06.27 14:4...</div>
<div class="a" style="left:108.66px;top:359.10px;font-size:8.5px;line-height:8.5px;width:27.04px;text-align:right;color:#262626;transform:scaleX(0.847);transform-origin:right center;">cadchf</div>
<div class="a" style="left:130.75px;top:359.10px;font-size:8.5px;line-height:8.5px;width:44.55px;text-align:right;color:#262626;transform:scaleX(0.791);transform-origin:right center;">120192663</div>
<div class="a" style="left:191.70px;top:359.10px;font-size:8.5px;line-height:8.5px;width:15.70px;text-align:right;color:#262626;transform:scaleX(0.847);transform-origin:right center;">buy</div>
<div class="a" style="left:244.76px;top:359.10px;font-size:8.5px;line-height:8.5px;width:18.54px;text-align:right;color:#262626;transform:scaleX(0.791);transform-origin:right center;">0.05</div>
<div class="a" style="left:286.37px;top:359.10px;font-size:8.5px;line-height:8.5px;width:32.73px;text-align:right;color:#262626;transform:scaleX(0.791);transform-origin:right center;">0.58498</div>
<div class="a" style="left:341.47px;top:359.10px;font-size:8.5px;line-height:8.5px;width:32.73px;text-align:right;color:#262626;transform:scaleX(0.791);transform-origin:right center;">0.58431</div>
<div class="a" style="left:431.71px;top:359.10px;font-size:8.5px;line-height:8.5px;width:79.99px;text-align:right;color:#262626;transform:scaleX(0.811);transform-origin:right center;">2025.06.27 14:54:13</div>
<div class="a" style="left:534.47px;top:359.10px;font-size:8.5px;line-height:8.5px;width:32.73px;text-align:right;color:#262626;transform:scaleX(0.791);transform-origin:right center;">0.58531</div>
<div class="a" style="left:613.96px;top:359.10px;font-size:8.5px;line-height:8.5px;width:18.54px;text-align:right;color:#1c1ce6;transform:scaleX(0.791);transform-origin:right center;">2.06</div>
<div class="a" style="left:664.94px;top:359.10px;font-size:8.5px;line-height:8.5px;width:28.46px;text-align:right;color:#1c1ce6;transform:scaleX(0.791);transform-origin:right center;">0.06 %</div>
<div class="bx" style="left:14.5px;top:369.2px;width:681.2px;height:12.7px;background:#e8e8e8;"></div>
<div class="bx" style="left:87px;top:369.2px;width:1px;height:12.7px;background:#dddddd;"></div>
<div class="bx" style="left:137px;top:369.2px;width:1px;height:12.7px;background:#dddddd;"></div>
<div class="bx" style="left:176px;top:369.2px;width:1px;height:12.7px;background:#dddddd;"></div>
<div class="bx" style="left:209px;top:369.2px;width:1px;height:12.7px;background:#dddddd;"></div>
<div class="bx" style="left:264px;top:369.2px;width:1px;height:12.7px;background:#dddddd;"></div>
<div class="bx" style="left:320px;top:369.2px;width:1px;height:12.7px;background:#dddddd;"></div>
<div class="bx" style="left:375px;top:369.2px;width:1px;height:12.7px;background:#dddddd;"></div>
<div class="bx" style="left:430px;top:369.2px;width:1px;height:12.7px;background:#dddddd;"></div>
<div class="bx" style="left:513px;top:369.2px;width:1px;height:12.7px;background:#dddddd;"></div>
<div class="bx" style="left:568px;top:369.2px;width:1px;height:12.7px;background:#dddddd;"></div>
<div class="bx" style="left:634px;top:369.2px;width:1px;height:12.7px;background:#dddddd;"></div>
<svg class="a" style="left:17.5px;top:370.70px" width="9" height="10"><rect x="1" y="0.7" width="6.6" height="8.4" rx="0.6" fill="#fff" stroke="#5a93cc" stroke-width="1.05"/><path d="M3 3.2 h2.6 M3 5.2 h2.6" stroke="#5a93cc" stroke-width="0.9" opacity="0.8"/></svg>
<div class="a" style="left:29.20px;top:371.80px;font-size:8.5px;line-height:8.5px;width:70.53px;color:#262626;transform:scaleX(0.814);transform-origin:left center;">2025.06.27 14:4...</div>
<div class="a" style="left:105.81px;top:371.80px;font-size:8.5px;line-height:8.5px;width:29.89px;text-align:right;color:#262626;transform:scaleX(0.847);transform-origin:right center;">gbpusd</div>
<div class="a" style="left:130.75px;top:371.80px;font-size:8.5px;line-height:8.5px;width:44.55px;text-align:right;color:#262626;transform:scaleX(0.791);transform-origin:right center;">120193224</div>
<div class="a" style="left:191.70px;top:371.80px;font-size:8.5px;line-height:8.5px;width:15.70px;text-align:right;color:#262626;transform:scaleX(0.847);transform-origin:right center;">buy</div>
<div class="a" style="left:244.76px;top:371.80px;font-size:8.5px;line-height:8.5px;width:18.54px;text-align:right;color:#262626;transform:scaleX(0.791);transform-origin:right center;">0.05</div>
<div class="a" style="left:286.37px;top:371.80px;font-size:8.5px;line-height:8.5px;width:32.73px;text-align:right;color:#262626;transform:scaleX(0.791);transform-origin:right center;">1.37345</div>
<div class="a" style="left:341.47px;top:371.80px;font-size:8.5px;line-height:8.5px;width:32.73px;text-align:right;color:#262626;transform:scaleX(0.791);transform-origin:right center;">1.37272</div>
<div class="a" style="left:431.71px;top:371.80px;font-size:8.5px;line-height:8.5px;width:79.99px;text-align:right;color:#262626;transform:scaleX(0.811);transform-origin:right center;">2025.06.27 14:54:14</div>
<div class="a" style="left:534.47px;top:371.80px;font-size:8.5px;line-height:8.5px;width:32.73px;text-align:right;color:#262626;transform:scaleX(0.791);transform-origin:right center;">1.37325</div>
<div class="a" style="left:611.13px;top:371.80px;font-size:8.5px;line-height:8.5px;width:21.37px;text-align:right;color:#e62222;transform:scaleX(0.791);transform-origin:right center;">-1.00</div>
<div class="a" style="left:662.11px;top:371.80px;font-size:8.5px;line-height:8.5px;width:31.29px;text-align:right;color:#e62222;transform:scaleX(0.791);transform-origin:right center;">-0.01 %</div>
<div class="bx" style="left:14.5px;top:381.9px;width:681.2px;height:12.7px;background:#ffffff;"></div>
<div class="bx" style="left:87px;top:381.9px;width:1px;height:12.7px;background:#dddddd;"></div>
<div class="bx" style="left:137px;top:381.9px;width:1px;height:12.7px;background:#dddddd;"></div>
<div class="bx" style="left:176px;top:381.9px;width:1px;height:12.7px;background:#dddddd;"></div>
<div class="bx" style="left:209px;top:381.9px;width:1px;height:12.7px;background:#dddddd;"></div>
<div class="bx" style="left:264px;top:381.9px;width:1px;height:12.7px;background:#dddddd;"></div>
<div class="bx" style="left:320px;top:381.9px;width:1px;height:12.7px;background:#dddddd;"></div>
<div class="bx" style="left:375px;top:381.9px;width:1px;height:12.7px;background:#dddddd;"></div>
<div class="bx" style="left:430px;top:381.9px;width:1px;height:12.7px;background:#dddddd;"></div>
<div class="bx" style="left:513px;top:381.9px;width:1px;height:12.7px;background:#dddddd;"></div>
<div class="bx" style="left:568px;top:381.9px;width:1px;height:12.7px;background:#dddddd;"></div>
<div class="bx" style="left:634px;top:381.9px;width:1px;height:12.7px;background:#dddddd;"></div>
<svg class="a" style="left:17.5px;top:383.40px" width="9" height="10"><rect x="1" y="0.7" width="6.6" height="8.4" rx="0.6" fill="#fff" stroke="#e0566c" stroke-width="1.05"/><path d="M3 3.2 h2.6 M3 5.2 h2.6" stroke="#e0566c" stroke-width="0.9" opacity="0.8"/></svg>
<div class="a" style="left:29.20px;top:384.50px;font-size:8.5px;line-height:8.5px;width:70.53px;color:#262626;transform:scaleX(0.814);transform-origin:left center;">2025.06.27 14:5...</div>
<div class="a" style="left:106.29px;top:384.50px;font-size:8.5px;line-height:8.5px;width:29.41px;text-align:right;color:#262626;transform:scaleX(0.847);transform-origin:right center;">xauusd</div>
<div class="a" style="left:130.75px;top:384.50px;font-size:8.5px;line-height:8.5px;width:44.55px;text-align:right;color:#262626;transform:scaleX(0.791);transform-origin:right center;">120193889</div>
<div class="a" style="left:192.65px;top:384.50px;font-size:8.5px;line-height:8.5px;width:14.75px;text-align:right;color:#262626;transform:scaleX(0.847);transform-origin:right center;">sell</div>
<div class="a" style="left:249.48px;top:384.50px;font-size:8.5px;line-height:8.5px;width:13.82px;text-align:right;color:#262626;transform:scaleX(0.791);transform-origin:right center;">0.5</div>
<div class="a" style="left:286.37px;top:384.50px;font-size:8.5px;line-height:8.5px;width:32.73px;text-align:right;color:#262626;transform:scaleX(0.791);transform-origin:right center;">3279.92</div>
<div class="a" style="left:396.57px;top:384.50px;font-size:8.5px;line-height:8.5px;width:32.73px;text-align:right;color:#262626;transform:scaleX(0.791);transform-origin:right center;">3268.74</div>
<div class="a" style="left:431.71px;top:384.50px;font-size:8.5px;line-height:8.5px;width:79.99px;text-align:right;color:#262626;transform:scaleX(0.811);transform-origin:right center;">2025.06.27 15:08:21</div>
<div class="a" style="left:534.47px;top:384.50px;font-size:8.5px;line-height:8.5px;width:32.73px;text-align:right;color:#262626;transform:scaleX(0.791);transform-origin:right center;">3277.63</div>
<div class="a" style="left:605.13px;top:384.50px;font-size:8.5px;line-height:8.5px;width:27.37px;text-align:right;color:#1c1ce6;transform:scaleX(0.791);transform-origin:right center;">114.50</div>
<div class="a" style="left:664.94px;top:384.50px;font-size:8.5px;line-height:8.5px;width:28.46px;text-align:right;color:#1c1ce6;transform:scaleX(0.791);transform-origin:right center;">0.07 %</div>
<div class="bx" style="left:14.5px;top:394.6px;width:681.2px;height:12.7px;background:#e8e8e8;"></div>
<div class="bx" style="left:87px;top:394.6px;width:1px;height:12.7px;background:#dddddd;"></div>
<div class="bx" style="left:137px;top:394.6px;width:1px;height:12.7px;background:#dddddd;"></div>
<div class="bx" style="left:176px;top:394.6px;width:1px;height:12.7px;background:#dddddd;"></div>
<div class="bx" style="left:209px;top:394.6px;width:1px;height:12.7px;background:#dddddd;"></div>
<div class="bx" style="left:264px;top:394.6px;width:1px;height:12.7px;background:#dddddd;"></div>
<div class="bx" style="left:320px;top:394.6px;width:1px;height:12.7px;background:#dddddd;"></div>
<div class="bx" style="left:375px;top:394.6px;width:1px;height:12.7px;background:#dddddd;"></div>
<div class="bx" style="left:430px;top:394.6px;width:1px;height:12.7px;background:#dddddd;"></div>
<div class="bx" style="left:513px;top:394.6px;width:1px;height:12.7px;background:#dddddd;"></div>
<div class="bx" style="left:568px;top:394.6px;width:1px;height:12.7px;background:#dddddd;"></div>
<div class="bx" style="left:634px;top:394.6px;width:1px;height:12.7px;background:#dddddd;"></div>
<svg class="a" style="left:17.5px;top:396.10px" width="9" height="10"><rect x="1" y="0.7" width="6.6" height="8.4" rx="0.6" fill="#fff" stroke="#e0566c" stroke-width="1.05"/><path d="M3 3.2 h2.6 M3 5.2 h2.6" stroke="#e0566c" stroke-width="0.9" opacity="0.8"/></svg>
<div class="a" style="left:29.20px;top:397.20px;font-size:8.5px;line-height:8.5px;width:70.53px;color:#262626;transform:scaleX(0.814);transform-origin:left center;">2025.06.27 14:5...</div>
<div class="a" style="left:106.29px;top:397.20px;font-size:8.5px;line-height:8.5px;width:29.41px;text-align:right;color:#262626;transform:scaleX(0.847);transform-origin:right center;">xauusd</div>
<div class="a" style="left:130.75px;top:397.20px;font-size:8.5px;line-height:8.5px;width:44.55px;text-align:right;color:#262626;transform:scaleX(0.791);transform-origin:right center;">120193810</div>
<div class="a" style="left:192.65px;top:397.20px;font-size:8.5px;line-height:8.5px;width:14.75px;text-align:right;color:#262626;transform:scaleX(0.847);transform-origin:right center;">sell</div>
<div class="a" style="left:249.48px;top:397.20px;font-size:8.5px;line-height:8.5px;width:13.82px;text-align:right;color:#262626;transform:scaleX(0.791);transform-origin:right center;">0.5</div>
<div class="a" style="left:286.37px;top:397.20px;font-size:8.5px;line-height:8.5px;width:32.73px;text-align:right;color:#262626;transform:scaleX(0.791);transform-origin:right center;">3277.96</div>
<div class="a" style="left:396.57px;top:397.20px;font-size:8.5px;line-height:8.5px;width:32.73px;text-align:right;color:#262626;transform:scaleX(0.791);transform-origin:right center;">3268.94</div>
<div class="a" style="left:431.71px;top:397.20px;font-size:8.5px;line-height:8.5px;width:79.99px;text-align:right;color:#262626;transform:scaleX(0.811);transform-origin:right center;">2025.06.27 15:08:22</div>
<div class="a" style="left:534.47px;top:397.20px;font-size:8.5px;line-height:8.5px;width:32.73px;text-align:right;color:#262626;transform:scaleX(0.791);transform-origin:right center;">3277.61</div>
<div class="a" style="left:609.23px;top:397.20px;font-size:8.5px;line-height:8.5px;width:23.27px;text-align:right;color:#1c1ce6;transform:scaleX(0.791);transform-origin:right center;">17.50</div>
<div class="a" style="left:664.94px;top:397.20px;font-size:8.5px;line-height:8.5px;width:28.46px;text-align:right;color:#1c1ce6;transform:scaleX(0.791);transform-origin:right center;">0.01 %</div>
<div class="bx" style="left:14.5px;top:407.3px;width:681.2px;height:12.7px;background:#ffffff;"></div>
<div class="bx" style="left:87px;top:407.3px;width:1px;height:12.7px;background:#dddddd;"></div>
<div class="bx" style="left:137px;top:407.3px;width:1px;height:12.7px;background:#dddddd;"></div>
<div class="bx" style="left:176px;top:407.3px;width:1px;height:12.7px;background:#dddddd;"></div>
<div class="bx" style="left:209px;top:407.3px;width:1px;height:12.7px;background:#dddddd;"></div>
<div class="bx" style="left:264px;top:407.3px;width:1px;height:12.7px;background:#dddddd;"></div>
<div class="bx" style="left:320px;top:407.3px;width:1px;height:12.7px;background:#dddddd;"></div>
<div class="bx" style="left:375px;top:407.3px;width:1px;height:12.7px;background:#dddddd;"></div>
<div class="bx" style="left:430px;top:407.3px;width:1px;height:12.7px;background:#dddddd;"></div>
<div class="bx" style="left:513px;top:407.3px;width:1px;height:12.7px;background:#dddddd;"></div>
<div class="bx" style="left:568px;top:407.3px;width:1px;height:12.7px;background:#dddddd;"></div>
<div class="bx" style="left:634px;top:407.3px;width:1px;height:12.7px;background:#dddddd;"></div>
<svg class="a" style="left:17.5px;top:408.80px" width="9" height="10"><rect x="1" y="0.7" width="6.6" height="8.4" rx="0.6" fill="#fff" stroke="#e0566c" stroke-width="1.05"/><path d="M3 3.2 h2.6 M3 5.2 h2.6" stroke="#e0566c" stroke-width="0.9" opacity="0.8"/></svg>
<div class="a" style="left:29.20px;top:409.90px;font-size:8.5px;line-height:8.5px;width:70.53px;color:#262626;transform:scaleX(0.814);transform-origin:left center;">2025.06.27 14:5...</div>
<div class="a" style="left:106.29px;top:409.90px;font-size:8.5px;line-height:8.5px;width:29.41px;text-align:right;color:#262626;transform:scaleX(0.847);transform-origin:right center;">xauusd</div>
<div class="a" style="left:130.75px;top:409.90px;font-size:8.5px;line-height:8.5px;width:44.55px;text-align:right;color:#262626;transform:scaleX(0.791);transform-origin:right center;">120193684</div>
<div class="a" style="left:192.65px;top:409.90px;font-size:8.5px;line-height:8.5px;width:14.75px;text-align:right;color:#262626;transform:scaleX(0.847);transform-origin:right center;">sell</div>
<div class="a" style="left:244.76px;top:409.90px;font-size:8.5px;line-height:8.5px;width:18.54px;text-align:right;color:#262626;transform:scaleX(0.791);transform-origin:right center;">0.05</div>
<div class="a" style="left:286.37px;top:409.90px;font-size:8.5px;line-height:8.5px;width:32.73px;text-align:right;color:#262626;transform:scaleX(0.791);transform-origin:right center;">3276.40</div>
<div class="a" style="left:396.57px;top:409.90px;font-size:8.5px;line-height:8.5px;width:32.73px;text-align:right;color:#262626;transform:scaleX(0.791);transform-origin:right center;">3268.57</div>
<div class="a" style="left:431.71px;top:409.90px;font-size:8.5px;line-height:8.5px;width:79.99px;text-align:right;color:#262626;transform:scaleX(0.811);transform-origin:right center;">2025.06.27 15:08:23</div>
<div class="a" style="left:534.47px;top:409.90px;font-size:8.5px;line-height:8.5px;width:32.73px;text-align:right;color:#262626;transform:scaleX(0.791);transform-origin:right center;">3277.39</div>
<div class="a" style="left:611.13px;top:409.90px;font-size:8.5px;line-height:8.5px;width:21.37px;text-align:right;color:#e62222;transform:scaleX(0.791);transform-origin:right center;">-4.95</div>
<div class="a" style="left:662.11px;top:409.90px;font-size:8.5px;line-height:8.5px;width:31.29px;text-align:right;color:#e62222;transform:scaleX(0.791);transform-origin:right center;">-0.03 %</div>
<div class="bx" style="left:14.5px;top:420.0px;width:681.2px;height:12.7px;background:#e8e8e8;"></div>
<div class="bx" style="left:87px;top:420.0px;width:1px;height:12.7px;background:#dddddd;"></div>
<div class="bx" style="left:137px;top:420.0px;width:1px;height:12.7px;background:#dddddd;"></div>
<div class="bx" style="left:176px;top:420.0px;width:1px;height:12.7px;background:#dddddd;"></div>
<div class="bx" style="left:209px;top:420.0px;width:1px;height:12.7px;background:#dddddd;"></div>
<div class="bx" style="left:264px;top:420.0px;width:1px;height:12.7px;background:#dddddd;"></div>
<div class="bx" style="left:320px;top:420.0px;width:1px;height:12.7px;background:#dddddd;"></div>
<div class="bx" style="left:375px;top:420.0px;width:1px;height:12.7px;background:#dddddd;"></div>
<div class="bx" style="left:430px;top:420.0px;width:1px;height:12.7px;background:#dddddd;"></div>
<div class="bx" style="left:513px;top:420.0px;width:1px;height:12.7px;background:#dddddd;"></div>
<div class="bx" style="left:568px;top:420.0px;width:1px;height:12.7px;background:#dddddd;"></div>
<div class="bx" style="left:634px;top:420.0px;width:1px;height:12.7px;background:#dddddd;"></div>
<svg class="a" style="left:17.5px;top:421.50px" width="9" height="10"><rect x="1" y="0.7" width="6.6" height="8.4" rx="0.6" fill="#fff" stroke="#5a93cc" stroke-width="1.05"/><path d="M3 3.2 h2.6 M3 5.2 h2.6" stroke="#5a93cc" stroke-width="0.9" opacity="0.8"/></svg>
<div class="a" style="left:29.20px;top:422.60px;font-size:8.5px;line-height:8.5px;width:70.53px;color:#262626;transform:scaleX(0.814);transform-origin:left center;">2025.06.27 17:1...</div>
<div class="a" style="left:106.29px;top:422.60px;font-size:8.5px;line-height:8.5px;width:29.41px;text-align:right;color:#262626;transform:scaleX(0.847);transform-origin:right center;">xauusd</div>
<div class="a" style="left:130.75px;top:422.60px;font-size:8.5px;line-height:8.5px;width:44.55px;text-align:right;color:#262626;transform:scaleX(0.791);transform-origin:right center;">120226300</div>
<div class="a" style="left:191.70px;top:422.60px;font-size:8.5px;line-height:8.5px;width:15.70px;text-align:right;color:#262626;transform:scaleX(0.847);transform-origin:right center;">buy</div>
<div class="a" style="left:249.48px;top:422.60px;font-size:8.5px;line-height:8.5px;width:13.82px;text-align:right;color:#262626;transform:scaleX(0.791);transform-origin:right center;">0.5</div>
<div class="a" style="left:286.37px;top:422.60px;font-size:8.5px;line-height:8.5px;width:32.73px;text-align:right;color:#262626;transform:scaleX(0.791);transform-origin:right center;">3271.70</div>
<div class="a" style="left:431.71px;top:422.60px;font-size:8.5px;line-height:8.5px;width:79.99px;text-align:right;color:#262626;transform:scaleX(0.811);transform-origin:right center;">2025.06.27 17:16:16</div>
<div class="a" style="left:534.47px;top:422.60px;font-size:8.5px;line-height:8.5px;width:32.73px;text-align:right;color:#262626;transform:scaleX(0.791);transform-origin:right center;">3268.33</div>
<div class="a" style="left:601.67px;top:422.60px;font-size:8.5px;line-height:8.5px;width:30.83px;text-align:right;color:#e62222;transform:scaleX(0.791);transform-origin:right center;">-168.50</div>
<div class="a" style="left:662.11px;top:422.60px;font-size:8.5px;line-height:8.5px;width:31.29px;text-align:right;color:#e62222;transform:scaleX(0.791);transform-origin:right center;">-0.10 %</div>
<div class="bx" style="left:14.5px;top:432.7px;width:681.2px;height:12.7px;background:#ffffff;"></div>
<div class="bx" style="left:87px;top:432.7px;width:1px;height:12.7px;background:#dddddd;"></div>
<div class="bx" style="left:137px;top:432.7px;width:1px;height:12.7px;background:#dddddd;"></div>
<div class="bx" style="left:176px;top:432.7px;width:1px;height:12.7px;background:#dddddd;"></div>
<div class="bx" style="left:209px;top:432.7px;width:1px;height:12.7px;background:#dddddd;"></div>
<div class="bx" style="left:264px;top:432.7px;width:1px;height:12.7px;background:#dddddd;"></div>
<div class="bx" style="left:320px;top:432.7px;width:1px;height:12.7px;background:#dddddd;"></div>
<div class="bx" style="left:375px;top:432.7px;width:1px;height:12.7px;background:#dddddd;"></div>
<div class="bx" style="left:430px;top:432.7px;width:1px;height:12.7px;background:#dddddd;"></div>
<div class="bx" style="left:513px;top:432.7px;width:1px;height:12.7px;background:#dddddd;"></div>
<div class="bx" style="left:568px;top:432.7px;width:1px;height:12.7px;background:#dddddd;"></div>
<div class="bx" style="left:634px;top:432.7px;width:1px;height:12.7px;background:#dddddd;"></div>
<svg class="a" style="left:17.5px;top:434.20px" width="9" height="10"><rect x="1" y="0.7" width="6.6" height="8.4" rx="0.6" fill="#fff" stroke="#e0566c" stroke-width="1.05"/><path d="M3 3.2 h2.6 M3 5.2 h2.6" stroke="#e0566c" stroke-width="0.9" opacity="0.8"/></svg>
<div class="a" style="left:29.20px;top:435.30px;font-size:8.5px;line-height:8.5px;width:70.53px;color:#262626;transform:scaleX(0.814);transform-origin:left center;">2025.06.27 17:1...</div>
<div class="a" style="left:106.29px;top:435.30px;font-size:8.5px;line-height:8.5px;width:29.41px;text-align:right;color:#262626;transform:scaleX(0.847);transform-origin:right center;">xauusd</div>
<div class="a" style="left:130.75px;top:435.30px;font-size:8.5px;line-height:8.5px;width:44.55px;text-align:right;color:#262626;transform:scaleX(0.791);transform-origin:right center;">120226519</div>
<div class="a" style="left:192.65px;top:435.30px;font-size:8.5px;line-height:8.5px;width:14.75px;text-align:right;color:#262626;transform:scaleX(0.847);transform-origin:right center;">sell</div>
<div class="a" style="left:249.48px;top:435.30px;font-size:8.5px;line-height:8.5px;width:13.82px;text-align:right;color:#262626;transform:scaleX(0.791);transform-origin:right center;">0.5</div>
<div class="a" style="left:286.37px;top:435.30px;font-size:8.5px;line-height:8.5px;width:32.73px;text-align:right;color:#262626;transform:scaleX(0.791);transform-origin:right center;">3267.78</div>
<div class="a" style="left:431.71px;top:435.30px;font-size:8.5px;line-height:8.5px;width:79.99px;text-align:right;color:#262626;transform:scaleX(0.811);transform-origin:right center;">2025.06.27 17:18:04</div>
<div class="a" style="left:534.47px;top:435.30px;font-size:8.5px;line-height:8.5px;width:32.73px;text-align:right;color:#262626;transform:scaleX(0.791);transform-origin:right center;">3267.58</div>
<div class="a" style="left:609.23px;top:435.30px;font-size:8.5px;line-height:8.5px;width:23.27px;text-align:right;color:#1c1ce6;transform:scaleX(0.791);transform-origin:right center;">10.00</div>
<div class="a" style="left:664.94px;top:435.30px;font-size:8.5px;line-height:8.5px;width:28.46px;text-align:right;color:#1c1ce6;transform:scaleX(0.791);transform-origin:right center;">0.01 %</div>
<div class="bx" style="left:14.5px;top:445.4px;width:681.2px;height:12.7px;background:#e8e8e8;"></div>
<div class="bx" style="left:87px;top:445.4px;width:1px;height:12.7px;background:#dddddd;"></div>
<div class="bx" style="left:137px;top:445.4px;width:1px;height:12.7px;background:#dddddd;"></div>
<div class="bx" style="left:176px;top:445.4px;width:1px;height:12.7px;background:#dddddd;"></div>
<div class="bx" style="left:209px;top:445.4px;width:1px;height:12.7px;background:#dddddd;"></div>
<div class="bx" style="left:264px;top:445.4px;width:1px;height:12.7px;background:#dddddd;"></div>
<div class="bx" style="left:320px;top:445.4px;width:1px;height:12.7px;background:#dddddd;"></div>
<div class="bx" style="left:375px;top:445.4px;width:1px;height:12.7px;background:#dddddd;"></div>
<div class="bx" style="left:430px;top:445.4px;width:1px;height:12.7px;background:#dddddd;"></div>
<div class="bx" style="left:513px;top:445.4px;width:1px;height:12.7px;background:#dddddd;"></div>
<div class="bx" style="left:568px;top:445.4px;width:1px;height:12.7px;background:#dddddd;"></div>
<div class="bx" style="left:634px;top:445.4px;width:1px;height:12.7px;background:#dddddd;"></div>
<svg class="a" style="left:17.5px;top:446.90px" width="9" height="10"><rect x="1" y="0.7" width="6.6" height="8.4" rx="0.6" fill="#fff" stroke="#e0566c" stroke-width="1.05"/><path d="M3 3.2 h2.6 M3 5.2 h2.6" stroke="#e0566c" stroke-width="0.9" opacity="0.8"/></svg>
<div class="a" style="left:29.20px;top:448.00px;font-size:8.5px;line-height:8.5px;width:70.53px;color:#262626;transform:scaleX(0.814);transform-origin:left center;">2025.06.30 04:2...</div>
<div class="a" style="left:106.29px;top:448.00px;font-size:8.5px;line-height:8.5px;width:29.41px;text-align:right;color:#262626;transform:scaleX(0.847);transform-origin:right center;">xauusd</div>
<div class="a" style="left:130.75px;top:448.00px;font-size:8.5px;line-height:8.5px;width:44.55px;text-align:right;color:#262626;transform:scaleX(0.791);transform-origin:right center;">120271418</div>
<div class="a" style="left:192.65px;top:448.00px;font-size:8.5px;line-height:8.5px;width:14.75px;text-align:right;color:#262626;transform:scaleX(0.847);transform-origin:right center;">sell</div>
<div class="a" style="left:244.76px;top:448.00px;font-size:8.5px;line-height:8.5px;width:18.54px;text-align:right;color:#262626;transform:scaleX(0.791);transform-origin:right center;">0.12</div>
<div class="a" style="left:286.37px;top:448.00px;font-size:8.5px;line-height:8.5px;width:32.73px;text-align:right;color:#262626;transform:scaleX(0.791);transform-origin:right center;">3272.04</div>
<div class="a" style="left:341.47px;top:448.00px;font-size:8.5px;line-height:8.5px;width:32.73px;text-align:right;color:#262626;transform:scaleX(0.791);transform-origin:right center;">3277.82</div>
<div class="a" style="left:396.57px;top:448.00px;font-size:8.5px;line-height:8.5px;width:32.73px;text-align:right;color:#262626;transform:scaleX(0.791);transform-origin:right center;">3257.43</div>
<div class="a" style="left:431.71px;top:448.00px;font-size:8.5px;line-height:8.5px;width:79.99px;text-align:right;color:#262626;transform:scaleX(0.811);transform-origin:right center;">2025.06.30 04:36:29</div>
<div class="a" style="left:534.47px;top:448.00px;font-size:8.5px;line-height:8.5px;width:32.73px;text-align:right;color:#262626;transform:scaleX(0.791);transform-origin:right center;">3272.65</div>
<div class="a" style="left:611.13px;top:448.00px;font-size:8.5px;line-height:8.5px;width:21.37px;text-align:right;color:#e62222;transform:scaleX(0.791);transform-origin:right center;">-7.32</div>
<div class="a" style="left:662.11px;top:448.00px;font-size:8.5px;line-height:8.5px;width:31.29px;text-align:right;color:#e62222;transform:scaleX(0.791);transform-origin:right center;">-0.02 %</div>
<div class="bx" style="left:14.5px;top:458.1px;width:681.2px;height:12.7px;background:#ffffff;"></div>
<div class="bx" style="left:87px;top:458.1px;width:1px;height:12.7px;background:#dddddd;"></div>
<div class="bx" style="left:137px;top:458.1px;width:1px;height:12.7px;background:#dddddd;"></div>
<div class="bx" style="left:176px;top:458.1px;width:1px;height:12.7px;background:#dddddd;"></div>
<div class="bx" style="left:209px;top:458.1px;width:1px;height:12.7px;background:#dddddd;"></div>
<div class="bx" style="left:264px;top:458.1px;width:1px;height:12.7px;background:#dddddd;"></div>
<div class="bx" style="left:320px;top:458.1px;width:1px;height:12.7px;background:#dddddd;"></div>
<div class="bx" style="left:375px;top:458.1px;width:1px;height:12.7px;background:#dddddd;"></div>
<div class="bx" style="left:430px;top:458.1px;width:1px;height:12.7px;background:#dddddd;"></div>
<div class="bx" style="left:513px;top:458.1px;width:1px;height:12.7px;background:#dddddd;"></div>
<div class="bx" style="left:568px;top:458.1px;width:1px;height:12.7px;background:#dddddd;"></div>
<div class="bx" style="left:634px;top:458.1px;width:1px;height:12.7px;background:#dddddd;"></div>
<svg class="a" style="left:17.5px;top:459.60px" width="9" height="10"><rect x="1" y="0.7" width="6.6" height="8.4" rx="0.6" fill="#fff" stroke="#5a93cc" stroke-width="1.05"/><path d="M3 3.2 h2.6 M3 5.2 h2.6" stroke="#5a93cc" stroke-width="0.9" opacity="0.8"/></svg>
<div class="a" style="left:29.20px;top:460.70px;font-size:8.5px;line-height:8.5px;width:70.53px;color:#262626;transform:scaleX(0.814);transform-origin:left center;">2025.06.30 04:3...</div>
<div class="a" style="left:106.29px;top:460.70px;font-size:8.5px;line-height:8.5px;width:29.41px;text-align:right;color:#262626;transform:scaleX(0.847);transform-origin:right center;">xauusd</div>
<div class="a" style="left:130.75px;top:460.70px;font-size:8.5px;line-height:8.5px;width:44.55px;text-align:right;color:#262626;transform:scaleX(0.791);transform-origin:right center;">120273589</div>
<div class="a" style="left:191.70px;top:460.70px;font-size:8.5px;line-height:8.5px;width:15.70px;text-align:right;color:#262626;transform:scaleX(0.847);transform-origin:right center;">buy</div>
<div class="a" style="left:244.76px;top:460.70px;font-size:8.5px;line-height:8.5px;width:18.54px;text-align:right;color:#262626;transform:scaleX(0.791);transform-origin:right center;">0.51</div>
<div class="a" style="left:286.37px;top:460.70px;font-size:8.5px;line-height:8.5px;width:32.73px;text-align:right;color:#262626;transform:scaleX(0.791);transform-origin:right center;">3272.46</div>
<div class="a" style="left:431.71px;top:460.70px;font-size:8.5px;line-height:8.5px;width:79.99px;text-align:right;color:#262626;transform:scaleX(0.811);transform-origin:right center;">2025.06.30 04:46:06</div>
<div class="a" style="left:534.47px;top:460.70px;font-size:8.5px;line-height:8.5px;width:32.73px;text-align:right;color:#262626;transform:scaleX(0.791);transform-origin:right center;">3273.10</div>
<div class="a" style="left:609.23px;top:460.70px;font-size:8.5px;line-height:8.5px;width:23.27px;text-align:right;color:#1c1ce6;transform:scaleX(0.791);transform-origin:right center;">32.64</div>
<div class="a" style="left:664.94px;top:460.70px;font-size:8.5px;line-height:8.5px;width:28.46px;text-align:right;color:#1c1ce6;transform:scaleX(0.791);transform-origin:right center;">0.02 %</div>
<div class="bx" style="left:14.5px;top:470.8px;width:681.2px;height:12.7px;background:#e8e8e8;"></div>
<div class="bx" style="left:87px;top:470.8px;width:1px;height:12.7px;background:#dddddd;"></div>
<div class="bx" style="left:137px;top:470.8px;width:1px;height:12.7px;background:#dddddd;"></div>
<div class="bx" style="left:176px;top:470.8px;width:1px;height:12.7px;background:#dddddd;"></div>
<div class="bx" style="left:209px;top:470.8px;width:1px;height:12.7px;background:#dddddd;"></div>
<div class="bx" style="left:264px;top:470.8px;width:1px;height:12.7px;background:#dddddd;"></div>
<div class="bx" style="left:320px;top:470.8px;width:1px;height:12.7px;background:#dddddd;"></div>
<div class="bx" style="left:375px;top:470.8px;width:1px;height:12.7px;background:#dddddd;"></div>
<div class="bx" style="left:430px;top:470.8px;width:1px;height:12.7px;background:#dddddd;"></div>
<div class="bx" style="left:513px;top:470.8px;width:1px;height:12.7px;background:#dddddd;"></div>
<div class="bx" style="left:568px;top:470.8px;width:1px;height:12.7px;background:#dddddd;"></div>
<div class="bx" style="left:634px;top:470.8px;width:1px;height:12.7px;background:#dddddd;"></div>
<svg class="a" style="left:17.5px;top:472.30px" width="9" height="10"><rect x="1" y="0.7" width="6.6" height="8.4" rx="0.6" fill="#fff" stroke="#5a93cc" stroke-width="1.05"/><path d="M3 3.2 h2.6 M3 5.2 h2.6" stroke="#5a93cc" stroke-width="0.9" opacity="0.8"/></svg>
<div class="a" style="left:29.20px;top:473.40px;font-size:8.5px;line-height:8.5px;width:70.53px;color:#262626;transform:scaleX(0.814);transform-origin:left center;">2025.06.30 13:1...</div>
<div class="a" style="left:106.29px;top:473.40px;font-size:8.5px;line-height:8.5px;width:29.41px;text-align:right;color:#262626;transform:scaleX(0.847);transform-origin:right center;">xauusd</div>
<div class="a" style="left:130.75px;top:473.40px;font-size:8.5px;line-height:8.5px;width:44.55px;text-align:right;color:#262626;transform:scaleX(0.791);transform-origin:right center;">120324030</div>
<div class="a" style="left:191.70px;top:473.40px;font-size:8.5px;line-height:8.5px;width:15.70px;text-align:right;color:#262626;transform:scaleX(0.847);transform-origin:right center;">buy</div>
<div class="a" style="left:244.76px;top:473.40px;font-size:8.5px;line-height:8.5px;width:18.54px;text-align:right;color:#262626;transform:scaleX(0.791);transform-origin:right center;">0.51</div>
<div class="a" style="left:286.37px;top:473.40px;font-size:8.5px;line-height:8.5px;width:32.73px;text-align:right;color:#262626;transform:scaleX(0.791);transform-origin:right center;">3287.56</div>
<div class="a" style="left:431.71px;top:473.40px;font-size:8.5px;line-height:8.5px;width:79.99px;text-align:right;color:#262626;transform:scaleX(0.811);transform-origin:right center;">2025.06.30 13:18:10</div>
<div class="a" style="left:534.47px;top:473.40px;font-size:8.5px;line-height:8.5px;width:32.73px;text-align:right;color:#262626;transform:scaleX(0.791);transform-origin:right center;">3286.09</div>
<div class="a" style="left:606.40px;top:473.40px;font-size:8.5px;line-height:8.5px;width:26.10px;text-align:right;color:#e62222;transform:scaleX(0.791);transform-origin:right center;">-74.97</div>
<div class="a" style="left:662.11px;top:473.40px;font-size:8.5px;line-height:8.5px;width:31.29px;text-align:right;color:#e62222;transform:scaleX(0.791);transform-origin:right center;">-0.04 %</div>
<div class="bx" style="left:14.5px;top:483.5px;width:681.2px;height:12.7px;background:#ffffff;"></div>
<div class="bx" style="left:87px;top:483.5px;width:1px;height:12.7px;background:#dddddd;"></div>
<div class="bx" style="left:137px;top:483.5px;width:1px;height:12.7px;background:#dddddd;"></div>
<div class="bx" style="left:176px;top:483.5px;width:1px;height:12.7px;background:#dddddd;"></div>
<div class="bx" style="left:209px;top:483.5px;width:1px;height:12.7px;background:#dddddd;"></div>
<div class="bx" style="left:264px;top:483.5px;width:1px;height:12.7px;background:#dddddd;"></div>
<div class="bx" style="left:320px;top:483.5px;width:1px;height:12.7px;background:#dddddd;"></div>
<div class="bx" style="left:375px;top:483.5px;width:1px;height:12.7px;background:#dddddd;"></div>
<div class="bx" style="left:430px;top:483.5px;width:1px;height:12.7px;background:#dddddd;"></div>
<div class="bx" style="left:513px;top:483.5px;width:1px;height:12.7px;background:#dddddd;"></div>
<div class="bx" style="left:568px;top:483.5px;width:1px;height:12.7px;background:#dddddd;"></div>
<div class="bx" style="left:634px;top:483.5px;width:1px;height:12.7px;background:#dddddd;"></div>
<svg class="a" style="left:17.5px;top:485.00px" width="9" height="10"><rect x="1" y="0.7" width="6.6" height="8.4" rx="0.6" fill="#fff" stroke="#e0566c" stroke-width="1.05"/><path d="M3 3.2 h2.6 M3 5.2 h2.6" stroke="#e0566c" stroke-width="0.9" opacity="0.8"/></svg>
<div class="a" style="left:29.20px;top:486.10px;font-size:8.5px;line-height:8.5px;width:70.53px;color:#262626;transform:scaleX(0.814);transform-origin:left center;">2025.06.30 13:1...</div>
<div class="a" style="left:106.29px;top:486.10px;font-size:8.5px;line-height:8.5px;width:29.41px;text-align:right;color:#262626;transform:scaleX(0.847);transform-origin:right center;">xauusd</div>
<div class="a" style="left:130.75px;top:486.10px;font-size:8.5px;line-height:8.5px;width:44.55px;text-align:right;color:#262626;transform:scaleX(0.791);transform-origin:right center;">120324159</div>
<div class="a" style="left:192.65px;top:486.10px;font-size:8.5px;line-height:8.5px;width:14.75px;text-align:right;color:#262626;transform:scaleX(0.847);transform-origin:right center;">sell</div>
<div class="a" style="left:244.76px;top:486.10px;font-size:8.5px;line-height:8.5px;width:18.54px;text-align:right;color:#262626;transform:scaleX(0.791);transform-origin:right center;">0.51</div>
<div class="a" style="left:287.00px;top:486.10px;font-size:8.5px;line-height:8.5px;width:32.10px;text-align:right;color:#262626;transform:scaleX(0.791);transform-origin:right center;">3286.11</div>
<div class="a" style="left:431.71px;top:486.10px;font-size:8.5px;line-height:8.5px;width:79.99px;text-align:right;color:#262626;transform:scaleX(0.811);transform-origin:right center;">2025.06.30 13:46:10</div>
<div class="a" style="left:534.47px;top:486.10px;font-size:8.5px;line-height:8.5px;width:32.73px;text-align:right;color:#262626;transform:scaleX(0.791);transform-origin:right center;">3283.09</div>
<div class="a" style="left:604.50px;top:486.10px;font-size:8.5px;line-height:8.5px;width:28.00px;text-align:right;color:#1c1ce6;transform:scaleX(0.791);transform-origin:right center;">154.02</div>
<div class="a" style="left:664.94px;top:486.10px;font-size:8.5px;line-height:8.5px;width:28.46px;text-align:right;color:#1c1ce6;transform:scaleX(0.791);transform-origin:right center;">0.09 %</div>
<div class="bx" style="left:14.5px;top:496.2px;width:681.2px;height:12.7px;background:#e8e8e8;"></div>
<div class="bx" style="left:87px;top:496.2px;width:1px;height:12.7px;background:#dddddd;"></div>
<div class="bx" style="left:137px;top:496.2px;width:1px;height:12.7px;background:#dddddd;"></div>
<div class="bx" style="left:176px;top:496.2px;width:1px;height:12.7px;background:#dddddd;"></div>
<div class="bx" style="left:209px;top:496.2px;width:1px;height:12.7px;background:#dddddd;"></div>
<div class="bx" style="left:264px;top:496.2px;width:1px;height:12.7px;background:#dddddd;"></div>
<div class="bx" style="left:320px;top:496.2px;width:1px;height:12.7px;background:#dddddd;"></div>
<div class="bx" style="left:375px;top:496.2px;width:1px;height:12.7px;background:#dddddd;"></div>
<div class="bx" style="left:430px;top:496.2px;width:1px;height:12.7px;background:#dddddd;"></div>
<div class="bx" style="left:513px;top:496.2px;width:1px;height:12.7px;background:#dddddd;"></div>
<div class="bx" style="left:568px;top:496.2px;width:1px;height:12.7px;background:#dddddd;"></div>
<div class="bx" style="left:634px;top:496.2px;width:1px;height:12.7px;background:#dddddd;"></div>
<svg class="a" style="left:17.5px;top:497.70px" width="9" height="10"><rect x="1" y="0.7" width="6.6" height="8.4" rx="0.6" fill="#fff" stroke="#5a93cc" stroke-width="1.05"/><path d="M3 3.2 h2.6 M3 5.2 h2.6" stroke="#5a93cc" stroke-width="0.9" opacity="0.8"/></svg>
<div class="a" style="left:29.20px;top:498.80px;font-size:8.5px;line-height:8.5px;width:70.53px;color:#262626;transform:scaleX(0.814);transform-origin:left center;">2025.06.30 15:5...</div>
<div class="a" style="left:106.29px;top:498.80px;font-size:8.5px;line-height:8.5px;width:29.41px;text-align:right;color:#262626;transform:scaleX(0.847);transform-origin:right center;">xauusd</div>
<div class="a" style="left:130.75px;top:498.80px;font-size:8.5px;line-height:8.5px;width:44.55px;text-align:right;color:#262626;transform:scaleX(0.791);transform-origin:right center;">120350241</div>
<div class="a" style="left:191.70px;top:498.80px;font-size:8.5px;line-height:8.5px;width:15.70px;text-align:right;color:#262626;transform:scaleX(0.847);transform-origin:right center;">buy</div>
<div class="a" style="left:244.76px;top:498.80px;font-size:8.5px;line-height:8.5px;width:18.54px;text-align:right;color:#262626;transform:scaleX(0.791);transform-origin:right center;">0.51</div>
<div class="a" style="left:286.37px;top:498.80px;font-size:8.5px;line-height:8.5px;width:32.73px;text-align:right;color:#262626;transform:scaleX(0.791);transform-origin:right center;">3284.48</div>
<div class="a" style="left:431.71px;top:498.80px;font-size:8.5px;line-height:8.5px;width:79.99px;text-align:right;color:#262626;transform:scaleX(0.811);transform-origin:right center;">2025.06.30 15:59:09</div>
<div class="a" style="left:534.47px;top:498.80px;font-size:8.5px;line-height:8.5px;width:32.73px;text-align:right;color:#262626;transform:scaleX(0.791);transform-origin:right center;">3281.73</div>
<div class="a" style="left:601.67px;top:498.80px;font-size:8.5px;line-height:8.5px;width:30.83px;text-align:right;color:#e62222;transform:scaleX(0.791);transform-origin:right center;">-140.25</div>
<div class="a" style="left:662.11px;top:498.80px;font-size:8.5px;line-height:8.5px;width:31.29px;text-align:right;color:#e62222;transform:scaleX(0.791);transform-origin:right center;">-0.08 %</div>
<div class="bx" style="left:14.5px;top:508.9px;width:681.2px;height:12.7px;background:#3399ff;"></div>
<div class="bx" style="left:87px;top:508.9px;width:1px;height:12.7px;background:#62aef8;"></div>
<div class="bx" style="left:137px;top:508.9px;width:1px;height:12.7px;background:#62aef8;"></div>
<div class="bx" style="left:176px;top:508.9px;width:1px;height:12.7px;background:#62aef8;"></div>
<div class="bx" style="left:209px;top:508.9px;width:1px;height:12.7px;background:#62aef8;"></div>
<div class="bx" style="left:264px;top:508.9px;width:1px;height:12.7px;background:#62aef8;"></div>
<div class="bx" style="left:320px;top:508.9px;width:1px;height:12.7px;background:#62aef8;"></div>
<div class="bx" style="left:375px;top:508.9px;width:1px;height:12.7px;background:#62aef8;"></div>
<div class="bx" style="left:430px;top:508.9px;width:1px;height:12.7px;background:#62aef8;"></div>
<div class="bx" style="left:513px;top:508.9px;width:1px;height:12.7px;background:#62aef8;"></div>
<div class="bx" style="left:568px;top:508.9px;width:1px;height:12.7px;background:#62aef8;"></div>
<div class="bx" style="left:634px;top:508.9px;width:1px;height:12.7px;background:#62aef8;"></div>
<svg class="a" style="left:18px;top:510.90px" width="8" height="10"><rect x="0.6" y="0.5" width="6.4" height="8.6" rx="1.3" fill="#fff"/><path d="M2.6 3.2 h2.4 M2.6 5.2 h2.4 M2.6 7.2 h2.4" stroke="#3399ff" stroke-width="0.9"/></svg>
<div class="a" style="left:29.20px;top:511.50px;font-size:8.5px;line-height:8.5px;width:70.53px;color:#ffffff;transform:scaleX(0.814);transform-origin:left center;">2025.06.30 15:5...</div>
<div class="a" style="left:106.29px;top:511.50px;font-size:8.5px;line-height:8.5px;width:29.41px;text-align:right;color:#ffffff;transform:scaleX(0.847);transform-origin:right center;">xauusd</div>
<div class="a" style="left:130.75px;top:511.50px;font-size:8.5px;line-height:8.5px;width:44.55px;text-align:right;color:#ffffff;transform:scaleX(0.791);transform-origin:right center;">120351663</div>
<div class="a" style="left:191.70px;top:511.50px;font-size:8.5px;line-height:8.5px;width:15.70px;text-align:right;color:#ffffff;transform:scaleX(0.847);transform-origin:right center;">buy</div>
<div class="a" style="left:244.76px;top:511.50px;font-size:8.5px;line-height:8.5px;width:18.54px;text-align:right;color:#ffffff;transform:scaleX(0.791);transform-origin:right center;">0.51</div>
<div class="a" style="left:286.37px;top:511.50px;font-size:8.5px;line-height:8.5px;width:32.73px;text-align:right;color:#ffffff;transform:scaleX(0.791);transform-origin:right center;">3282.36</div>
<div class="a" style="left:341.47px;top:511.50px;font-size:8.5px;line-height:8.5px;width:32.73px;text-align:right;color:#ffffff;transform:scaleX(0.791);transform-origin:right center;">3281.73</div>
<div class="a" style="left:431.71px;top:511.50px;font-size:8.5px;line-height:8.5px;width:79.99px;text-align:right;color:#ffffff;transform:scaleX(0.811);transform-origin:right center;">2025.06.30 16:13:10</div>
<div class="a" style="left:534.47px;top:511.50px;font-size:8.5px;line-height:8.5px;width:32.73px;text-align:right;color:#ffffff;transform:scaleX(0.791);transform-origin:right center;">3281.66</div>
<div class="a" style="left:606.40px;top:511.50px;font-size:8.5px;line-height:8.5px;width:26.10px;text-align:right;color:#ffffff;transform:scaleX(0.791);transform-origin:right center;">-35.70</div>
<div class="a" style="left:662.11px;top:511.50px;font-size:8.5px;line-height:8.5px;width:31.29px;text-align:right;color:#ffffff;transform:scaleX(0.791);transform-origin:right center;">-0.02 %</div>
<div class="bx" style="left:14.5px;top:521.6px;width:681.2px;height:12.7px;background:#e8e8e8;"></div>
<div class="bx" style="left:87px;top:521.6px;width:1px;height:12.7px;background:#dddddd;"></div>
<div class="bx" style="left:137px;top:521.6px;width:1px;height:12.7px;background:#dddddd;"></div>
<div class="bx" style="left:176px;top:521.6px;width:1px;height:12.7px;background:#dddddd;"></div>
<div class="bx" style="left:209px;top:521.6px;width:1px;height:12.7px;background:#dddddd;"></div>
<div class="bx" style="left:264px;top:521.6px;width:1px;height:12.7px;background:#dddddd;"></div>
<div class="bx" style="left:320px;top:521.6px;width:1px;height:12.7px;background:#dddddd;"></div>
<div class="bx" style="left:375px;top:521.6px;width:1px;height:12.7px;background:#dddddd;"></div>
<div class="bx" style="left:430px;top:521.6px;width:1px;height:12.7px;background:#dddddd;"></div>
<div class="bx" style="left:513px;top:521.6px;width:1px;height:12.7px;background:#dddddd;"></div>
<div class="bx" style="left:568px;top:521.6px;width:1px;height:12.7px;background:#dddddd;"></div>
<div class="bx" style="left:634px;top:521.6px;width:1px;height:12.7px;background:#dddddd;"></div>
<svg class="a" style="left:17.5px;top:523.10px" width="9" height="10"><rect x="1" y="0.7" width="6.6" height="8.4" rx="0.6" fill="#fff" stroke="#e0566c" stroke-width="1.05"/><path d="M3 3.2 h2.6 M3 5.2 h2.6" stroke="#e0566c" stroke-width="0.9" opacity="0.8"/></svg>
<div class="a" style="left:29.20px;top:524.20px;font-size:8.5px;line-height:8.5px;width:69.90px;color:#262626;transform:scaleX(0.814);transform-origin:left center;">2025.07.01 11:1...</div>
<div class="a" style="left:106.29px;top:524.20px;font-size:8.5px;line-height:8.5px;width:29.41px;text-align:right;color:#262626;transform:scaleX(0.847);transform-origin:right center;">xauusd</div>
<div class="a" style="left:130.75px;top:524.20px;font-size:8.5px;line-height:8.5px;width:44.55px;text-align:right;color:#262626;transform:scaleX(0.791);transform-origin:right center;">120466270</div>
<div class="a" style="left:192.65px;top:524.20px;font-size:8.5px;line-height:8.5px;width:14.75px;text-align:right;color:#262626;transform:scaleX(0.847);transform-origin:right center;">sell</div>
<div class="a" style="left:244.76px;top:524.20px;font-size:8.5px;line-height:8.5px;width:18.54px;text-align:right;color:#262626;transform:scaleX(0.791);transform-origin:right center;">0.51</div>
<div class="a" style="left:286.37px;top:524.20px;font-size:8.5px;line-height:8.5px;width:32.73px;text-align:right;color:#262626;transform:scaleX(0.791);transform-origin:right center;">3338.58</div>
<div class="a" style="left:396.57px;top:524.20px;font-size:8.5px;line-height:8.5px;width:32.73px;text-align:right;color:#262626;transform:scaleX(0.791);transform-origin:right center;">3329.67</div>
<div class="a" style="left:431.71px;top:524.20px;font-size:8.5px;line-height:8.5px;width:79.99px;text-align:right;color:#262626;transform:scaleX(0.811);transform-origin:right center;">2025.07.01 12:25:30</div>
<div class="a" style="left:534.47px;top:524.20px;font-size:8.5px;line-height:8.5px;width:32.73px;text-align:right;color:#262626;transform:scaleX(0.791);transform-origin:right center;">3343.72</div>
<div class="a" style="left:601.67px;top:524.20px;font-size:8.5px;line-height:8.5px;width:30.83px;text-align:right;color:#e62222;transform:scaleX(0.791);transform-origin:right center;">-262.14</div>
<div class="a" style="left:662.11px;top:524.20px;font-size:8.5px;line-height:8.5px;width:31.29px;text-align:right;color:#e62222;transform:scaleX(0.791);transform-origin:right center;">-0.15 %</div>
<div class="bx" style="left:14.5px;top:534.3px;width:681.2px;height:12.7px;background:#ffffff;"></div>
<div class="bx" style="left:87px;top:534.3px;width:1px;height:12.7px;background:#dddddd;"></div>
<div class="bx" style="left:137px;top:534.3px;width:1px;height:12.7px;background:#dddddd;"></div>
<div class="bx" style="left:176px;top:534.3px;width:1px;height:12.7px;background:#dddddd;"></div>
<div class="bx" style="left:209px;top:534.3px;width:1px;height:12.7px;background:#dddddd;"></div>
<div class="bx" style="left:264px;top:534.3px;width:1px;height:12.7px;background:#dddddd;"></div>
<div class="bx" style="left:320px;top:534.3px;width:1px;height:12.7px;background:#dddddd;"></div>
<div class="bx" style="left:375px;top:534.3px;width:1px;height:12.7px;background:#dddddd;"></div>
<div class="bx" style="left:430px;top:534.3px;width:1px;height:12.7px;background:#dddddd;"></div>
<div class="bx" style="left:513px;top:534.3px;width:1px;height:12.7px;background:#dddddd;"></div>
<div class="bx" style="left:568px;top:534.3px;width:1px;height:12.7px;background:#dddddd;"></div>
<div class="bx" style="left:634px;top:534.3px;width:1px;height:12.7px;background:#dddddd;"></div>
<svg class="a" style="left:17.5px;top:535.80px" width="9" height="10"><rect x="1" y="0.7" width="6.6" height="8.4" rx="0.6" fill="#fff" stroke="#e0566c" stroke-width="1.05"/><path d="M3 3.2 h2.6 M3 5.2 h2.6" stroke="#e0566c" stroke-width="0.9" opacity="0.8"/></svg>
<div class="a" style="left:29.20px;top:536.90px;font-size:8.5px;line-height:8.5px;width:69.90px;color:#262626;transform:scaleX(0.814);transform-origin:left center;">2025.07.01 11:2...</div>
<div class="a" style="left:106.29px;top:536.90px;font-size:8.5px;line-height:8.5px;width:29.41px;text-align:right;color:#262626;transform:scaleX(0.847);transform-origin:right center;">xauusd</div>
<div class="a" style="left:130.75px;top:536.90px;font-size:8.5px;line-height:8.5px;width:44.55px;text-align:right;color:#262626;transform:scaleX(0.791);transform-origin:right center;">120466433</div>
<div class="a" style="left:192.65px;top:536.90px;font-size:8.5px;line-height:8.5px;width:14.75px;text-align:right;color:#262626;transform:scaleX(0.847);transform-origin:right center;">sell</div>
<div class="a" style="left:244.76px;top:536.90px;font-size:8.5px;line-height:8.5px;width:18.54px;text-align:right;color:#262626;transform:scaleX(0.791);transform-origin:right center;">0.51</div>
<div class="a" style="left:286.37px;top:536.90px;font-size:8.5px;line-height:8.5px;width:32.73px;text-align:right;color:#262626;transform:scaleX(0.791);transform-origin:right center;">3339.66</div>
<div class="a" style="left:396.57px;top:536.90px;font-size:8.5px;line-height:8.5px;width:32.73px;text-align:right;color:#262626;transform:scaleX(0.791);transform-origin:right center;">3329.80</div>
<div class="a" style="left:431.71px;top:536.90px;font-size:8.5px;line-height:8.5px;width:79.99px;text-align:right;color:#262626;transform:scaleX(0.811);transform-origin:right center;">2025.07.01 12:25:50</div>
<div class="a" style="left:534.47px;top:536.90px;font-size:8.5px;line-height:8.5px;width:32.73px;text-align:right;color:#262626;transform:scaleX(0.791);transform-origin:right center;">3344.01</div>
<div class="a" style="left:601.67px;top:536.90px;font-size:8.5px;line-height:8.5px;width:30.83px;text-align:right;color:#e62222;transform:scaleX(0.791);transform-origin:right center;">-221.85</div>
<div class="a" style="left:662.11px;top:536.90px;font-size:8.5px;line-height:8.5px;width:31.29px;text-align:right;color:#e62222;transform:scaleX(0.791);transform-origin:right center;">-0.13 %</div>
<div class="bx" style="left:14.5px;top:547.0px;width:681.2px;height:12.7px;background:#c9c9c9;"></div>
<svg class="a" style="left:17.6px;top:549.40px" width="9" height="9"><circle cx="4.3" cy="4.3" r="3.3" fill="none" stroke="#1a1a1a" stroke-width="1"/><path d="M2.5 4.3 h3.6" stroke="#1a1a1a" stroke-width="1"/></svg>
<div class="a" style="left:29.20px;top:549.93px;font-size:8px;line-height:8px;width:302.50px;color:#111;font-weight:bold;transform:scaleX(0.938);transform-origin:left center;white-space:pre;">Profit: 216.36  Credit: 0.00  Deposit: 500.00  Withdrawal: -700.00  Balance: 16.36</div>
<div class="a" style="left:605.01px;top:549.77px;font-size:8.3px;line-height:8.3px;width:27.39px;text-align:right;color:#111;font-weight:bold;transform:scaleX(0.930);transform-origin:right center;">216.36</div>
<div class="bx" style="left:14.5px;top:568px;width:691px;height:1px;background:#3a3a3a;"></div>
<div class="bx" style="left:695.2px;top:167.3px;width:10.1px;height:401px;background:#fdfdfd;border-left:1px solid #d4d4d4"></div>
<div class="bx" style="left:696px;top:177.2px;width:9.3px;height:0.8px;background:#dcdcdc;"></div>
<div class="bx" style="left:696.2px;top:380px;width:9.1px;height:173px;background:#dadada;"></div>
<div class="bx" style="left:696.2px;top:553px;width:9.1px;height:4.4px;background:#e6e6e6;"></div>
<svg class="a" style="left:696px;top:167.5px" width="10" height="401"><path d="M2.7 7.6 l2.3 -2.3 l2.3 2.3" fill="none" stroke="#606060" stroke-width="1"/><path d="M2.7 393.8 l2.3 2.3 l2.3 -2.3" fill="none" stroke="#606060" stroke-width="1"/><path d="M3 299.5 h4 M3 301.3 h4 M3 303.1 h4" stroke="#555" stroke-width="0.8"/></svg>
<div class="bx" style="left:695.5px;top:568px;width:10px;height:1px;background:#3a3a3a;"></div>
<div class="bx" style="left:14.5px;top:569px;width:690.8px;height:15px;background:#f0f0f0;"></div>
<div class="bx" style="left:93px;top:568px;width:37px;height:12.5px;background:#fdfdfd;border:1px solid #3a3a3a;border-top:none"></div>
<div class="a" style="left:25.00px;top:571.23px;font-size:8px;line-height:8px;width:22.60px;color:#8c8c8c;transform:scaleX(0.946);transform-origin:left center;">Trade</div>
<div class="a" style="left:57.00px;top:571.23px;font-size:8px;line-height:8px;width:35.80px;color:#8c8c8c;transform:scaleX(0.888);transform-origin:left center;">Exposure</div>
<div class="a" style="left:100.00px;top:571.23px;font-size:8px;line-height:8px;width:26.89px;color:#111;transform:scaleX(0.964);transform-origin:left center;">History</div>
<div class="a" style="left:137.00px;top:571.23px;font-size:8px;line-height:8px;width:22.00px;color:#8c8c8c;transform:scaleX(0.885);transform-origin:left center;">News</div>
<div class="a" style="left:167.40px;top:571.23px;font-size:8px;line-height:8px;width:29.57px;color:#8c8c8c;transform:scaleX(0.979);transform-origin:left center;">Mailbox</div>
<div class="a" style="left:216.70px;top:571.23px;font-size:8px;line-height:8px;width:34.47px;color:#8c8c8c;transform:scaleX(0.915);transform-origin:left center;">Calendar</div>
<div class="a" style="left:258.80px;top:571.23px;font-size:8px;line-height:8px;width:36.24px;color:#8c8c8c;transform:scaleX(0.952);transform-origin:left center;">Company</div>
<div class="a" style="left:305.00px;top:571.23px;font-size:8px;line-height:8px;width:22.45px;color:#8c8c8c;transform:scaleX(0.910);transform-origin:left center;">Alerts</div>
<div class="a" style="left:336.80px;top:571.23px;font-size:8px;line-height:8px;width:28.23px;color:#8c8c8c;transform:scaleX(0.923);transform-origin:left center;">Articles</div>
<div class="a" style="left:373.40px;top:571.23px;font-size:8px;line-height:8px;width:41.58px;color:#8c8c8c;transform:scaleX(0.884);transform-origin:left center;">Code Base</div>
<div class="a" style="left:421.40px;top:571.23px;font-size:8px;line-height:8px;width:29.12px;color:#8c8c8c;transform:scaleX(0.859);transform-origin:left center;">Experts</div>
<div class="a" style="left:457.00px;top:571.23px;font-size:8px;line-height:8px;width:28.24px;color:#8c8c8c;transform:scaleX(0.922);transform-origin:left center;">Journal</div>
<div class="bx" style="left:51px;top:570.6px;width:1px;height:10px;background:#a8a8a8;"></div>
<div class="bx" style="left:161.2px;top:570.6px;width:1px;height:10px;background:#a8a8a8;"></div>
<div class="bx" style="left:210.5px;top:570.6px;width:1px;height:10px;background:#a8a8a8;"></div>
<div class="bx" style="left:252.6px;top:570.6px;width:1px;height:10px;background:#a8a8a8;"></div>
<div class="bx" style="left:298.8px;top:570.6px;width:1px;height:10px;background:#a8a8a8;"></div>
<div class="bx" style="left:330.7px;top:570.6px;width:1px;height:10px;background:#a8a8a8;"></div>
<div class="bx" style="left:367.2px;top:570.6px;width:1px;height:10px;background:#a8a8a8;"></div>
<div class="bx" style="left:415.2px;top:570.6px;width:1px;height:10px;background:#a8a8a8;"></div>
<div class="bx" style="left:451.5px;top:570.6px;width:1px;height:10px;background:#a8a8a8;"></div>
<div class="a" style="left:195.20px;top:574.84px;font-size:6.8px;line-height:6.8px;width:9.19px;color:#e02424;font-weight:bold;transform:scaleX(0.988);transform-origin:left center;">11</div>
<svg class="a" style="left:0;top:0" width="710" height="600" viewBox="0 0 710 600"><path d="M549.5 574.5 h6.5 v6 h-6.5z" fill="#f5bd00"/><path d="M550.8 574.5 v-1.6 q2 -2.4 4 0 v1.6" fill="none" stroke="#e0a000" stroke-width="1.1"/><text x="591.00" y="578.60" font-size="6.4" fill="#3b7dc4" font-family="Liberation Sans" font-weight="bold" text-anchor="start" textLength="11.00" lengthAdjust="spacingAndGlyphs">0+0</text><path d="M635.4 575.6 l4.6 -4 l4.6 4 h-1.6 v4.4 h-6 v-4.4z" fill="#a8cbee" stroke="#3b7dc4" stroke-width="1"/><path d="M638 577 h4 l-2 2z" fill="#3b7dc4"/><circle cx="672.8" cy="575.6" r="4.2" fill="#bcd8f2" stroke="#3b7dc4" stroke-width="1.4"/></svg>
<div class="a" style="left:560.00px;top:572.23px;font-size:8px;line-height:8px;width:26.45px;color:#1a1a1a;transform:scaleX(0.920);transform-origin:left center;">Market</div>
<div class="a" style="left:603.50px;top:572.23px;font-size:8px;line-height:8px;width:28.24px;color:#1a1a1a;transform:scaleX(0.896);transform-origin:left center;">Signals</div>
<div class="a" style="left:646.60px;top:572.23px;font-size:8px;line-height:8px;width:18.01px;color:#1a1a1a;transform:scaleX(0.825);transform-origin:left center;">VPS</div>
<div class="a" style="left:680.40px;top:572.23px;font-size:8px;line-height:8px;width:23.79px;color:#1a1a1a;transform:scaleX(0.918);transform-origin:left center;">Tester</div>
<div class="bx" style="left:4px;top:583.8px;width:701.3px;height:13.7px;background:#f0f0f0;border-top:1px solid #fafafa"></div>
<div class="bx" style="left:266.3px;top:585px;width:1px;height:12.5px;background:#cfcfcf;"></div>
<div class="bx" style="left:348px;top:585px;width:1px;height:12.5px;background:#cfcfcf;"></div>
<div class="bx" style="left:410.6px;top:585px;width:1px;height:12.5px;background:#cfcfcf;"></div>
<div class="bx" style="left:455.5px;top:585px;width:1px;height:12.5px;background:#cfcfcf;"></div>
<div class="bx" style="left:500.4px;top:585px;width:1px;height:12.5px;background:#cfcfcf;"></div>
<div class="bx" style="left:543.8px;top:585px;width:1px;height:12.5px;background:#cfcfcf;"></div>
<div class="bx" style="left:587.8px;top:585px;width:1px;height:12.5px;background:#cfcfcf;"></div>
<div class="bx" style="left:628.9px;top:585px;width:1px;height:12.5px;background:#cfcfcf;"></div>
<div class="a" style="left:6.00px;top:588.03px;font-size:8px;line-height:8px;width:68.24px;color:#111;transform:scaleX(0.876);transform-origin:left center;">For Help, press F1</div>
<div class="a" style="left:271.00px;top:588.03px;font-size:8px;line-height:8px;width:27.35px;color:#111;transform:scaleX(0.947);transform-origin:left center;">Default</div>
<svg class="a" style="left:630px;top:586px" width="12" height="10"><path d="M4.2 8 h1.3 v-1.8 h-1.3z M6.4 8 h1.3 v-3.3 h-1.3z M8.6 8 h1.3 v-4.8 h-1.3z" fill="#3cb043"/></svg>
<div class="a" style="left:645.40px;top:588.03px;font-size:8px;line-height:8px;width:39.36px;color:#111;transform:scaleX(0.894);transform-origin:left center;">210.64 ms</div>
</body></html>
